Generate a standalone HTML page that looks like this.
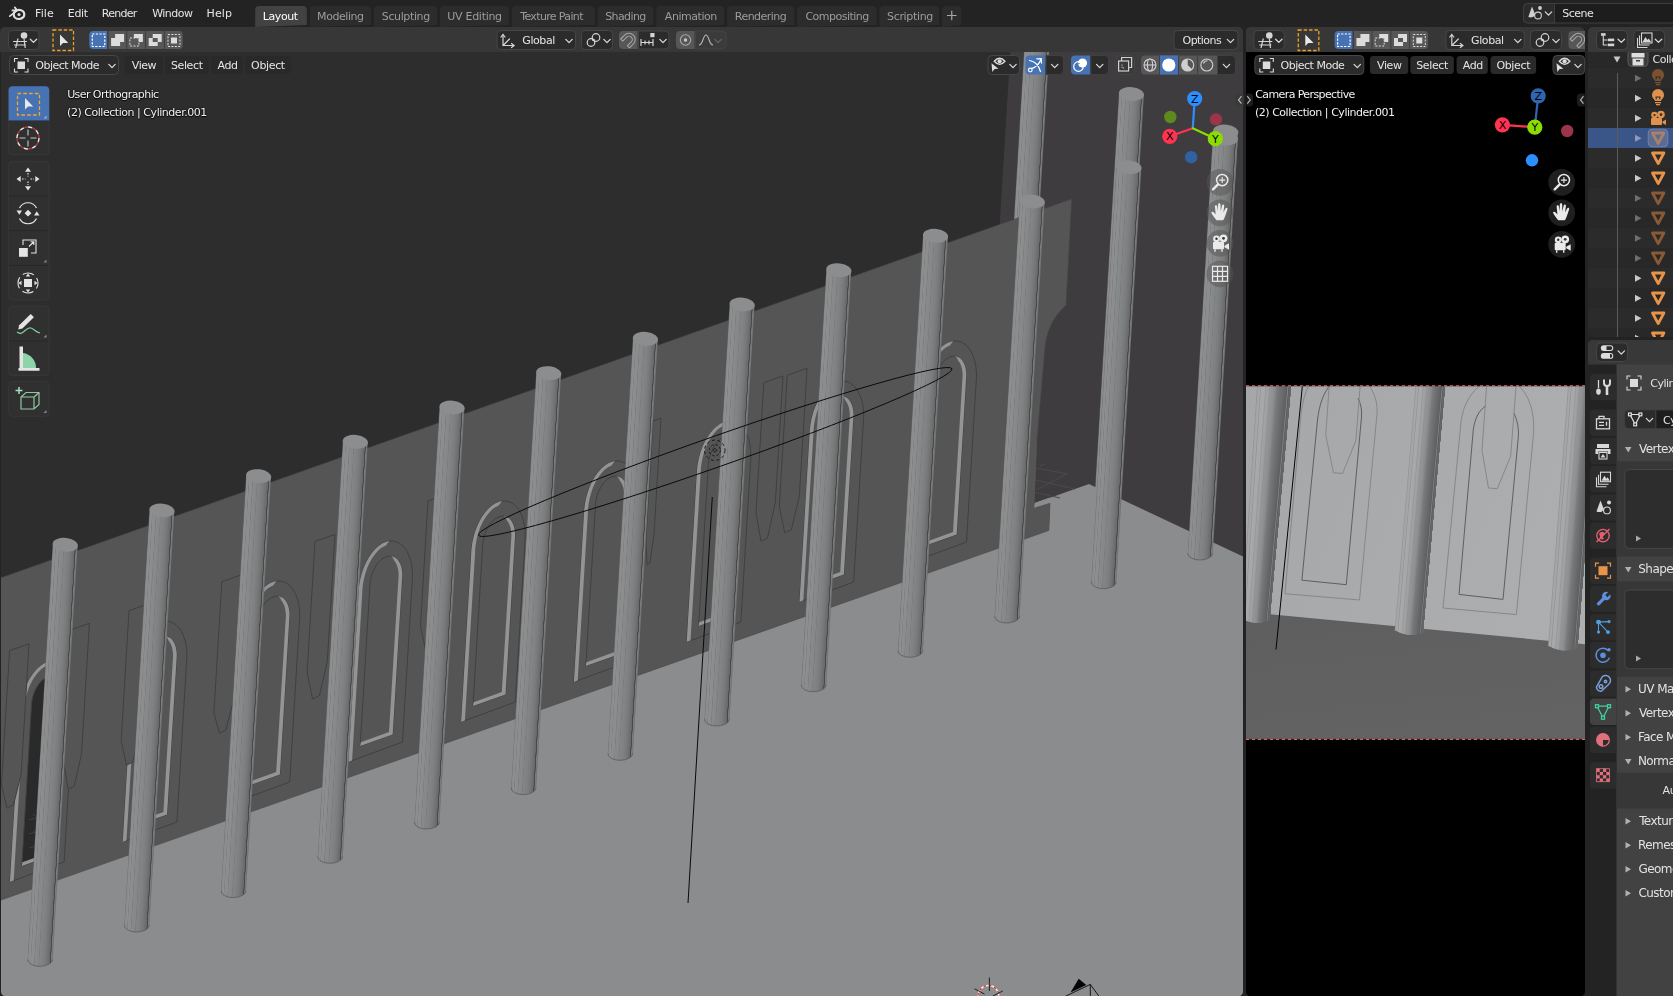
<!DOCTYPE html>
<html><head><meta charset="utf-8"><title>Blender</title>
<style>
html,body{margin:0;padding:0;background:#232323;overflow:hidden}
#app{position:relative;width:1673px;height:996px;background:#232323;overflow:hidden;font-family:'DejaVu Sans','Liberation Sans',sans-serif}
.t{position:absolute;z-index:5;white-space:nowrap;line-height:1;height:1em}
.b{position:absolute;box-sizing:border-box}
#tx{position:absolute;left:0;top:0;width:1673px;height:996px;z-index:5;will-change:transform}
svg{position:absolute;left:0;top:0;overflow:hidden}
</style></head><body><div id="app">
<svg width="1673" height="996" viewBox="0 0 1673 996"><defs>
<clipPath id="cv1"><rect x="1" y="27" width="1242" height="969.5" rx="5"/></clipPath>
<linearGradient id="colg" x1="0" x2="1" y1="0" y2="0"><stop offset="0" stop-color="#6c6d6e"/><stop offset="0.03" stop-color="#8a8b8c"/><stop offset="0.1" stop-color="#8f9091"/><stop offset="0.125" stop-color="#7d7e7f"/><stop offset="0.15" stop-color="#8d8e8f"/><stop offset="0.25" stop-color="#8b8c8d"/><stop offset="0.275" stop-color="#7b7c7d"/><stop offset="0.3" stop-color="#898a8b"/><stop offset="0.43" stop-color="#868788"/><stop offset="0.455" stop-color="#7a7b7c"/><stop offset="0.48" stop-color="#848586"/><stop offset="0.62" stop-color="#7f8081"/><stop offset="0.75" stop-color="#767778"/><stop offset="0.84" stop-color="#6c6d6e"/><stop offset="0.885" stop-color="#686969"/><stop offset="0.895" stop-color="#474747"/><stop offset="0.925" stop-color="#4b4b4b"/><stop offset="0.94" stop-color="#7c7d7e"/><stop offset="1.0" stop-color="#6f7071"/></linearGradient>
</defs>
<g clip-path="url(#cv1)">
<rect x="0" y="27" width="1244" height="970" fill="#2d2d2d"/>
<polygon points="1011.8,27 1244,27 1244,560 1089,484 990,520 999.8,222" fill="#3e3c3e"/>
<g transform="translate(1041.5,-30.0) skewX(-3.451)"><rect x="-12.5" y="0" width="25.0" height="260" fill="url(#colg)"/></g>
<g transform="translate(1131.4,94.0) skewX(-3.451)"><path d="M-12.5,0 L-12.5,414.7 A12.5,6.8 0 0 0 12.5,414.7 L12.5,0 Z" fill="url(#colg)"/><path d="M-12.5,414.7 A12.5,6.8 0 0 0 12.5,414.7" fill="none" stroke="#5c5c5d" stroke-width="0.8"/><ellipse cx="0" cy="0" rx="12.7" ry="6.8" fill="#8c8d8e" transform="rotate(7)"/></g>
<g transform="translate(1225.7,131.5) skewX(-3.451)"><rect x="-12.5" y="0" width="25.0" height="60" fill="url(#colg)"/><ellipse cx="0" cy="0" rx="12.7" ry="6.8" fill="#8c8d8e" transform="rotate(7)"/></g>
<polygon points="0,868 1089,484 1244,557 1244,1000 0,1000" fill="#8b8c8d"/>
<g stroke="#4b4a4b" stroke-width="1" fill="none"><path d="M1036,468 L1068,474 M1035,480 L1075,489 M1034,492 L1060,498 M1036,490 L1067,474 M1040,466 L1045,464"/></g>
<path d="M0,578.2 L1071.7,199 L1066,305 C1052,318 1046,332 1044.5,352 L1037,440 L1034,503 L1050,503.5 L1048.8,530.5 L0,900.4 Z" fill="#555555" stroke="#484848" stroke-width="0.6"/>
<polygon points="1034.5,503 1050,497.5 1050,503 1034,508" fill="#8b8c8d"/>
<polygon points="1025,506 1034.5,503 1034,508 1050,503 1049,530 1024,538.5" fill="#555555"/>
<polygon points="1029,440 1037,440 1034.5,503 1025,506" fill="#555555"/>
<polygon points="9.9,882.0 19.9,715.6 20.2,709.8 20.9,703.9 22.1,698.0 23.7,692.3 25.7,686.8 28.0,681.7 30.7,676.9 33.7,672.7 36.9,669.0 40.3,666.0 43.8,663.6 47.3,662.0 50.8,661.1 54.3,661.0 57.6,661.7 60.8,663.1 63.7,665.2 66.4,668.1 68.7,671.6 70.6,675.7 72.2,680.3 73.3,685.3 73.9,690.7 74.1,696.4 64.1,862.0" fill="none" stroke="#404040" stroke-width="1"/>
<polygon points="9.9,882.0 19.9,715.6 20.2,709.8 20.9,703.9 22.1,698.0 23.7,692.3 25.7,686.8 28.0,681.7 30.7,676.9 33.7,672.7 36.9,669.0 40.3,666.0 43.8,663.6 47.3,662.0 50.8,661.1 47.5,665.6 44.4,667.0 41.4,669.1 38.5,671.9 35.8,675.2 33.2,679.0 30.9,683.3 28.8,688.0 27.1,693.0 25.7,698.2 24.7,703.6 24.0,709.0 23.8,714.3 13.7,880.6" fill="#939495"/>
<polygon points="21.8,866.0 31.4,706.8 31.6,703.5 32.1,700.3 32.8,697.1 33.7,693.9 34.9,690.8 36.4,688.0 38.0,685.3 39.7,682.9 41.7,680.8 43.7,679.1 45.8,677.8 47.9,676.8 50.0,676.3 52.1,676.1 54.1,676.4 56.0,677.2 57.8,678.3 59.3,679.8 60.7,681.7 61.9,683.9 62.8,686.4 63.4,689.2 63.8,692.1 63.9,695.2 54.3,854.5" fill="#2a2a2a" stroke="#404040" stroke-width="1"/>
<g stroke="#444" stroke-width="0.8"><path d="M29,820 l22,-6 M29,834 l22,-6 M29,848 l22,-6 M33,814 l12,10 M33,830 l12,10"/></g>
<polygon points="52.1,676.1 54.1,676.4 56.0,677.2 57.8,678.3 59.3,679.8 60.7,681.7 61.9,683.9 62.8,686.4 63.4,689.2 63.8,692.1 63.9,695.2 54.3,854.5 21.8,866.0 22.4,862.2 50.6,851.9 60.2,695.8 60.1,692.6 59.7,689.7 59.1,686.9 58.2,684.4 57.0,682.2 55.6,680.3 55.0,678.7 54.1,677.4 53.2,676.6 52.1,676.1" fill="#939495"/>
<polygon points="122.7,842.0 132.7,675.6 133.0,669.8 133.7,663.9 134.9,658.0 136.5,652.3 138.5,646.8 140.8,641.7 143.5,636.9 146.5,632.7 149.7,629.0 153.1,626.0 156.6,623.6 160.1,622.0 163.6,621.1 167.1,621.0 170.4,621.7 173.6,623.1 176.5,625.2 179.2,628.1 181.5,631.6 183.4,635.7 185.0,640.3 186.1,645.3 186.7,650.7 186.9,656.4 176.9,822.0" fill="none" stroke="#404040" stroke-width="1"/>
<polygon points="122.7,842.0 132.7,675.6 133.0,669.8 133.7,663.9 134.9,658.0 136.5,652.3 138.5,646.8 140.8,641.7 143.5,636.9 146.5,632.7 149.7,629.0 153.1,626.0 156.6,623.6 160.1,622.0 163.6,621.1 160.3,625.6 157.2,627.0 154.2,629.1 151.3,631.9 148.6,635.2 146.0,639.0 143.7,643.3 141.6,648.0 139.9,653.0 138.5,658.2 137.5,663.6 136.8,669.0 136.6,674.3 126.5,840.6" fill="#939495"/>
<polygon points="134.6,826.0 144.2,666.8 144.4,663.5 144.9,660.3 145.6,657.1 146.5,653.9 147.7,650.8 149.2,648.0 150.8,645.3 152.5,642.9 154.5,640.8 156.5,639.1 158.6,637.8 160.7,636.8 162.8,636.3 164.9,636.1 166.9,636.4 168.8,637.2 170.6,638.3 172.1,639.8 173.5,641.7 174.7,643.9 175.6,646.4 176.2,649.2 176.6,652.1 176.8,655.2 167.1,814.5" fill="none" stroke="#404040" stroke-width="1"/>
<polygon points="164.9,636.1 166.9,636.4 168.8,637.2 170.6,638.3 172.1,639.8 173.5,641.7 174.7,643.9 175.6,646.4 176.2,649.2 176.6,652.1 176.8,655.2 167.1,814.5 134.6,826.0 135.2,822.2 163.4,811.9 173.1,655.8 172.9,652.6 172.5,649.7 171.9,646.9 171.0,644.4 169.8,642.2 168.4,640.3 167.8,638.7 166.9,637.4 166.0,636.6 164.9,636.1" fill="#939495"/>
<polygon points="235.5,802.0 245.5,635.6 245.8,629.8 246.5,623.9 247.7,618.0 249.3,612.3 251.3,606.8 253.6,601.7 256.3,596.9 259.3,592.7 262.5,589.0 265.9,586.0 269.4,583.6 272.9,582.0 276.4,581.1 279.9,581.0 283.2,581.7 286.4,583.1 289.3,585.2 292.0,588.1 294.3,591.6 296.2,595.7 297.8,600.3 298.9,605.3 299.5,610.7 299.7,616.4 289.7,782.0" fill="none" stroke="#404040" stroke-width="1"/>
<polygon points="235.5,802.0 245.5,635.6 245.8,629.8 246.5,623.9 247.7,618.0 249.3,612.3 251.3,606.8 253.6,601.7 256.3,596.9 259.3,592.7 262.5,589.0 265.9,586.0 269.4,583.6 272.9,582.0 276.4,581.1 273.1,585.6 270.0,587.0 267.0,589.1 264.1,591.9 261.4,595.2 258.8,599.0 256.5,603.3 254.4,608.0 252.7,613.0 251.3,618.2 250.3,623.6 249.6,629.0 249.4,634.3 239.3,800.6" fill="#939495"/>
<polygon points="247.4,786.0 257.0,626.8 257.2,623.5 257.7,620.3 258.4,617.1 259.3,613.9 260.5,610.8 262.0,608.0 263.6,605.3 265.3,602.9 267.3,600.8 269.3,599.1 271.4,597.8 273.5,596.8 275.6,596.3 277.7,596.1 279.7,596.4 281.6,597.2 283.4,598.3 284.9,599.8 286.3,601.7 287.5,603.9 288.4,606.4 289.0,609.2 289.4,612.1 289.5,615.2 279.9,774.5" fill="none" stroke="#404040" stroke-width="1"/>
<polygon points="277.7,596.1 279.7,596.4 281.6,597.2 283.4,598.3 284.9,599.8 286.3,601.7 287.5,603.9 288.4,606.4 289.0,609.2 289.4,612.1 289.5,615.2 279.9,774.5 247.4,786.0 248.0,782.2 276.2,771.9 285.9,615.8 285.7,612.6 285.3,609.7 284.7,606.9 283.8,604.4 282.6,602.2 281.2,600.3 280.6,598.7 279.7,597.4 278.8,596.6 277.7,596.1" fill="#939495"/>
<polygon points="348.3,762.0 358.3,595.6 358.6,589.8 359.3,583.9 360.5,578.0 362.1,572.3 364.1,566.8 366.4,561.7 369.1,556.9 372.1,552.7 375.3,549.0 378.7,546.0 382.2,543.6 385.7,542.0 389.2,541.1 392.7,541.0 396.0,541.7 399.2,543.1 402.1,545.2 404.8,548.1 407.1,551.6 409.0,555.7 410.6,560.3 411.7,565.3 412.3,570.7 412.5,576.4 402.5,742.0" fill="none" stroke="#404040" stroke-width="1"/>
<polygon points="348.3,762.0 358.3,595.6 358.6,589.8 359.3,583.9 360.5,578.0 362.1,572.3 364.1,566.8 366.4,561.7 369.1,556.9 372.1,552.7 375.3,549.0 378.7,546.0 382.2,543.6 385.7,542.0 389.2,541.1 385.9,545.6 382.8,547.0 379.8,549.1 376.9,551.9 374.2,555.2 371.6,559.0 369.3,563.3 367.2,568.0 365.5,573.0 364.1,578.2 363.1,583.6 362.4,589.0 362.2,594.3 352.1,760.6" fill="#939495"/>
<polygon points="360.2,746.0 369.8,586.8 370.0,583.5 370.5,580.3 371.2,577.1 372.1,573.9 373.3,570.8 374.8,568.0 376.4,565.3 378.1,562.9 380.1,560.8 382.1,559.1 384.2,557.8 386.3,556.8 388.4,556.3 390.5,556.1 392.5,556.4 394.4,557.2 396.2,558.3 397.7,559.8 399.1,561.7 400.3,563.9 401.2,566.4 401.8,569.2 402.2,572.1 402.3,575.2 392.7,734.5" fill="none" stroke="#404040" stroke-width="1"/>
<polygon points="390.5,556.1 392.5,556.4 394.4,557.2 396.2,558.3 397.7,559.8 399.1,561.7 400.3,563.9 401.2,566.4 401.8,569.2 402.2,572.1 402.3,575.2 392.7,734.5 360.2,746.0 360.8,742.2 389.0,731.9 398.6,575.8 398.5,572.6 398.1,569.7 397.5,566.9 396.6,564.4 395.4,562.2 394.0,560.3 393.4,558.7 392.5,557.4 391.6,556.6 390.5,556.1" fill="#939495"/>
<polygon points="461.1,722.0 471.1,555.6 471.4,549.8 472.1,543.9 473.3,538.0 474.9,532.3 476.9,526.8 479.2,521.7 481.9,516.9 484.9,512.7 488.1,509.0 491.5,506.0 495.0,503.6 498.5,502.0 502.0,501.1 505.5,501.0 508.8,501.7 512.0,503.1 514.9,505.2 517.6,508.1 519.9,511.6 521.8,515.7 523.4,520.3 524.5,525.3 525.1,530.7 525.3,536.4 515.3,702.0" fill="none" stroke="#404040" stroke-width="1"/>
<polygon points="461.1,722.0 471.1,555.6 471.4,549.8 472.1,543.9 473.3,538.0 474.9,532.3 476.9,526.8 479.2,521.7 481.9,516.9 484.9,512.7 488.1,509.0 491.5,506.0 495.0,503.6 498.5,502.0 502.0,501.1 498.7,505.6 495.6,507.0 492.6,509.1 489.7,511.9 487.0,515.2 484.4,519.0 482.1,523.3 480.0,528.0 478.3,533.0 476.9,538.2 475.9,543.6 475.2,549.0 475.0,554.3 464.9,720.6" fill="#939495"/>
<polygon points="473.0,706.0 482.6,546.8 482.8,543.5 483.3,540.3 484.0,537.1 484.9,533.9 486.1,530.8 487.6,528.0 489.2,525.3 490.9,522.9 492.9,520.8 494.9,519.1 497.0,517.8 499.1,516.8 501.2,516.3 503.3,516.1 505.3,516.4 507.2,517.2 509.0,518.3 510.5,519.8 511.9,521.7 513.1,523.9 514.0,526.4 514.6,529.2 515.0,532.1 515.1,535.2 505.5,694.5" fill="none" stroke="#404040" stroke-width="1"/>
<polygon points="503.3,516.1 505.3,516.4 507.2,517.2 509.0,518.3 510.5,519.8 511.9,521.7 513.1,523.9 514.0,526.4 514.6,529.2 515.0,532.1 515.1,535.2 505.5,694.5 473.0,706.0 473.6,702.2 501.8,691.9 511.4,535.8 511.3,532.6 510.9,529.7 510.3,526.9 509.4,524.4 508.2,522.2 506.8,520.3 506.2,518.7 505.3,517.4 504.4,516.6 503.3,516.1" fill="#939495"/>
<polygon points="573.9,682.0 583.9,515.6 584.2,509.8 584.9,503.9 586.1,498.0 587.7,492.3 589.7,486.8 592.0,481.7 594.7,476.9 597.7,472.7 600.9,469.0 604.3,466.0 607.8,463.6 611.3,462.0 614.8,461.1 618.3,461.0 621.6,461.7 624.8,463.1 627.7,465.2 630.4,468.1 632.7,471.6 634.6,475.7 636.2,480.3 637.3,485.3 637.9,490.7 638.1,496.4 628.1,662.0" fill="none" stroke="#404040" stroke-width="1"/>
<polygon points="573.9,682.0 583.9,515.6 584.2,509.8 584.9,503.9 586.1,498.0 587.7,492.3 589.7,486.8 592.0,481.7 594.7,476.9 597.7,472.7 600.9,469.0 604.3,466.0 607.8,463.6 611.3,462.0 614.8,461.1 611.5,465.6 608.4,467.0 605.4,469.1 602.5,471.9 599.8,475.2 597.2,479.0 594.9,483.3 592.8,488.0 591.1,493.0 589.7,498.2 588.7,503.6 588.0,509.0 587.8,514.3 577.7,680.6" fill="#939495"/>
<polygon points="585.8,666.0 595.4,506.8 595.6,503.5 596.1,500.3 596.8,497.1 597.7,493.9 598.9,490.8 600.4,488.0 602.0,485.3 603.7,482.9 605.7,480.8 607.7,479.1 609.8,477.8 611.9,476.8 614.0,476.3 616.1,476.1 618.1,476.4 620.0,477.2 621.8,478.3 623.3,479.8 624.7,481.7 625.9,483.9 626.8,486.4 627.4,489.2 627.8,492.1 627.9,495.2 618.3,654.5" fill="none" stroke="#404040" stroke-width="1"/>
<polygon points="616.1,476.1 618.1,476.4 620.0,477.2 621.8,478.3 623.3,479.8 624.7,481.7 625.9,483.9 626.8,486.4 627.4,489.2 627.8,492.1 627.9,495.2 618.3,654.5 585.8,666.0 586.4,662.2 614.6,651.9 624.2,495.8 624.1,492.6 623.7,489.7 623.1,486.9 622.2,484.4 621.0,482.2 619.6,480.3 619.0,478.7 618.1,477.4 617.2,476.6 616.1,476.1" fill="#939495"/>
<polygon points="686.7,642.0 696.7,475.6 697.0,469.8 697.7,463.9 698.9,458.0 700.5,452.3 702.5,446.8 704.8,441.7 707.5,436.9 710.5,432.7 713.7,429.0 717.1,426.0 720.6,423.6 724.1,422.0 727.6,421.1 731.1,421.0 734.4,421.7 737.6,423.1 740.5,425.2 743.2,428.1 745.5,431.6 747.4,435.7 749.0,440.3 750.1,445.3 750.7,450.7 750.9,456.4 740.9,622.0" fill="none" stroke="#404040" stroke-width="1"/>
<polygon points="686.7,642.0 696.7,475.6 697.0,469.8 697.7,463.9 698.9,458.0 700.5,452.3 702.5,446.8 704.8,441.7 707.5,436.9 710.5,432.7 713.7,429.0 717.1,426.0 720.6,423.6 724.1,422.0 727.6,421.1 724.3,425.6 721.2,427.0 718.2,429.1 715.3,431.9 712.6,435.2 710.0,439.0 707.7,443.3 705.6,448.0 703.9,453.0 702.5,458.2 701.5,463.6 700.8,469.0 700.6,474.3 690.5,640.6" fill="#939495"/>
<polygon points="698.6,626.0 708.2,466.8 708.4,463.5 708.9,460.3 709.6,457.1 710.5,453.9 711.7,450.8 713.2,448.0 714.8,445.3 716.5,442.9 718.5,440.8 720.5,439.1 722.6,437.8 724.7,436.8 726.8,436.3 728.9,436.1 730.9,436.4 732.8,437.2 734.6,438.3 736.1,439.8 737.5,441.7 738.7,443.9 739.6,446.4 740.2,449.2 740.6,452.1 740.8,455.2 731.1,614.5" fill="none" stroke="#404040" stroke-width="1"/>
<polygon points="728.9,436.1 730.9,436.4 732.8,437.2 734.6,438.3 736.1,439.8 737.5,441.7 738.7,443.9 739.6,446.4 740.2,449.2 740.6,452.1 740.8,455.2 731.1,614.5 698.6,626.0 699.2,622.2 727.4,611.9 737.0,455.8 736.9,452.6 736.5,449.7 735.9,446.9 735.0,444.4 733.8,442.2 732.4,440.3 731.8,438.7 730.9,437.4 730.0,436.6 728.9,436.1" fill="#939495"/>
<polygon points="799.5,602.0 809.5,435.6 809.8,429.8 810.5,423.9 811.7,418.0 813.3,412.3 815.3,406.8 817.6,401.7 820.3,396.9 823.3,392.7 826.5,389.0 829.9,386.0 833.4,383.6 836.9,382.0 840.4,381.1 843.9,381.0 847.2,381.7 850.4,383.1 853.3,385.2 856.0,388.1 858.3,391.6 860.2,395.7 861.8,400.3 862.9,405.3 863.5,410.7 863.7,416.4 853.7,582.0" fill="none" stroke="#404040" stroke-width="1"/>
<polygon points="799.5,602.0 809.5,435.6 809.8,429.8 810.5,423.9 811.7,418.0 813.3,412.3 815.3,406.8 817.6,401.7 820.3,396.9 823.3,392.7 826.5,389.0 829.9,386.0 833.4,383.6 836.9,382.0 840.4,381.1 837.1,385.6 834.0,387.0 831.0,389.1 828.1,391.9 825.4,395.2 822.8,399.0 820.5,403.3 818.4,408.0 816.7,413.0 815.3,418.2 814.3,423.6 813.6,429.0 813.4,434.3 803.3,600.6" fill="#939495"/>
<polygon points="811.4,586.0 821.0,426.8 821.2,423.5 821.7,420.3 822.4,417.1 823.3,413.9 824.5,410.8 826.0,408.0 827.6,405.3 829.3,402.9 831.3,400.8 833.3,399.1 835.4,397.8 837.5,396.8 839.6,396.3 841.7,396.1 843.7,396.4 845.6,397.2 847.4,398.3 848.9,399.8 850.3,401.7 851.5,403.9 852.4,406.4 853.0,409.2 853.4,412.1 853.5,415.2 843.9,574.5" fill="none" stroke="#404040" stroke-width="1"/>
<polygon points="841.7,396.1 843.7,396.4 845.6,397.2 847.4,398.3 848.9,399.8 850.3,401.7 851.5,403.9 852.4,406.4 853.0,409.2 853.4,412.1 853.5,415.2 843.9,574.5 811.4,586.0 812.0,582.2 840.2,571.9 849.8,415.8 849.7,412.6 849.3,409.7 848.7,406.9 847.8,404.4 846.6,402.2 845.2,400.3 844.6,398.7 843.7,397.4 842.8,396.6 841.7,396.1" fill="#939495"/>
<polygon points="912.3,562.0 922.3,395.6 922.6,389.8 923.3,383.9 924.5,378.0 926.1,372.3 928.1,366.8 930.4,361.7 933.1,356.9 936.1,352.7 939.3,349.0 942.7,346.0 946.2,343.6 949.7,342.0 953.2,341.1 956.7,341.0 960.0,341.7 963.2,343.1 966.1,345.2 968.8,348.1 971.1,351.6 973.0,355.7 974.6,360.3 975.7,365.3 976.3,370.7 976.5,376.4 966.5,542.0" fill="none" stroke="#404040" stroke-width="1"/>
<polygon points="912.3,562.0 922.3,395.6 922.6,389.8 923.3,383.9 924.5,378.0 926.1,372.3 928.1,366.8 930.4,361.7 933.1,356.9 936.1,352.7 939.3,349.0 942.7,346.0 946.2,343.6 949.7,342.0 953.2,341.1 949.9,345.6 946.8,347.0 943.8,349.1 940.9,351.9 938.2,355.2 935.6,359.0 933.3,363.3 931.2,368.0 929.5,373.0 928.1,378.2 927.1,383.6 926.4,389.0 926.2,394.3 916.1,560.6" fill="#939495"/>
<polygon points="924.2,546.0 933.8,386.8 934.0,383.5 934.5,380.3 935.2,377.1 936.1,373.9 937.3,370.8 938.8,368.0 940.4,365.3 942.1,362.9 944.1,360.8 946.1,359.1 948.2,357.8 950.3,356.8 952.4,356.3 954.5,356.1 956.5,356.4 958.4,357.2 960.2,358.3 961.7,359.8 963.1,361.7 964.3,363.9 965.2,366.4 965.8,369.2 966.2,372.1 966.3,375.2 956.7,534.5" fill="none" stroke="#404040" stroke-width="1"/>
<polygon points="954.5,356.1 956.5,356.4 958.4,357.2 960.2,358.3 961.7,359.8 963.1,361.7 964.3,363.9 965.2,366.4 965.8,369.2 966.2,372.1 966.3,375.2 956.7,534.5 924.2,546.0 924.8,542.2 953.0,531.9 962.6,375.8 962.5,372.6 962.1,369.7 961.5,366.9 960.6,364.4 959.4,362.2 958.0,360.3 957.4,358.7 956.5,357.4 955.6,356.6 954.5,356.1" fill="#939495"/>
<polygon points="9.6,650.6 29.0,643.8 21.2,773.8 13.5,804.8 6.9,808.1 1.5,784.6" fill="#555555" stroke="#404040" stroke-width="1"/>
<polygon points="71.7,629.5 89.4,623.3 81.6,753.3 74.3,786.1 68.3,789.3 63.6,763.5" fill="#555555" stroke="#404040" stroke-width="1"/>
<polygon points="129.0,610.7 148.0,604.0 140.4,730.0 132.8,762.0 126.4,765.3 121.2,740.7" fill="#555555" stroke="#404040" stroke-width="1"/>
<polygon points="221.8,581.7 240.8,575.0 233.1,702.0 225.8,730.0 219.4,733.3 213.9,712.7" fill="#555555" stroke="#404040" stroke-width="1"/>
<polygon points="315.0,541.5 335.0,534.4 327.3,661.4 319.4,695.6 312.6,699.0 307.1,672.5" fill="#555555" stroke="#404040" stroke-width="1"/>
<polygon points="428.0,501.0 447.0,494.3 439.7,615.3 432.1,647.3 425.7,650.6 420.5,626.0" fill="#555555" stroke="#404040" stroke-width="1"/>
<polygon points="653.0,421.0 661.0,418.2 654.0,534.2 649.9,563.0 647.1,565.0 645.8,541.0" fill="#555555" stroke="#404040" stroke-width="1"/>
<polygon points="763.8,382.7 783.0,375.9 775.4,501.9 767.5,538.0 761.0,541.3 756.0,512.7" fill="#555555" stroke="#404040" stroke-width="1"/>
<polygon points="787.2,375.3 807.1,368.3 799.4,495.3 791.5,529.4 784.7,532.8 779.3,506.3" fill="#555555" stroke="#404040" stroke-width="1"/>
<g transform="translate(65.2,544.8) skewX(-3.451)"><path d="M-12.5,0 L-12.5,414.7 A12.5,6.8 0 0 0 12.5,414.7 L12.5,0 Z" fill="url(#colg)"/><path d="M-12.5,414.7 A12.5,6.8 0 0 0 12.5,414.7" fill="none" stroke="#5c5c5d" stroke-width="0.8"/><ellipse cx="0" cy="0" rx="12.7" ry="6.8" fill="#8c8d8e" transform="rotate(7)"/></g>
<g transform="translate(161.9,510.5) skewX(-3.451)"><path d="M-12.5,0 L-12.5,414.7 A12.5,6.8 0 0 0 12.5,414.7 L12.5,0 Z" fill="url(#colg)"/><path d="M-12.5,414.7 A12.5,6.8 0 0 0 12.5,414.7" fill="none" stroke="#5c5c5d" stroke-width="0.8"/><ellipse cx="0" cy="0" rx="12.7" ry="6.8" fill="#8c8d8e" transform="rotate(7)"/></g>
<g transform="translate(258.6,476.1) skewX(-3.451)"><path d="M-12.5,0 L-12.5,414.7 A12.5,6.8 0 0 0 12.5,414.7 L12.5,0 Z" fill="url(#colg)"/><path d="M-12.5,414.7 A12.5,6.8 0 0 0 12.5,414.7" fill="none" stroke="#5c5c5d" stroke-width="0.8"/><ellipse cx="0" cy="0" rx="12.7" ry="6.8" fill="#8c8d8e" transform="rotate(7)"/></g>
<g transform="translate(355.3,441.8) skewX(-3.451)"><path d="M-12.5,0 L-12.5,414.7 A12.5,6.8 0 0 0 12.5,414.7 L12.5,0 Z" fill="url(#colg)"/><path d="M-12.5,414.7 A12.5,6.8 0 0 0 12.5,414.7" fill="none" stroke="#5c5c5d" stroke-width="0.8"/><ellipse cx="0" cy="0" rx="12.7" ry="6.8" fill="#8c8d8e" transform="rotate(7)"/></g>
<g transform="translate(452.0,407.5) skewX(-3.451)"><path d="M-12.5,0 L-12.5,414.7 A12.5,6.8 0 0 0 12.5,414.7 L12.5,0 Z" fill="url(#colg)"/><path d="M-12.5,414.7 A12.5,6.8 0 0 0 12.5,414.7" fill="none" stroke="#5c5c5d" stroke-width="0.8"/><ellipse cx="0" cy="0" rx="12.7" ry="6.8" fill="#8c8d8e" transform="rotate(7)"/></g>
<g transform="translate(548.7,373.1) skewX(-3.451)"><path d="M-12.5,0 L-12.5,414.7 A12.5,6.8 0 0 0 12.5,414.7 L12.5,0 Z" fill="url(#colg)"/><path d="M-12.5,414.7 A12.5,6.8 0 0 0 12.5,414.7" fill="none" stroke="#5c5c5d" stroke-width="0.8"/><ellipse cx="0" cy="0" rx="12.7" ry="6.8" fill="#8c8d8e" transform="rotate(7)"/></g>
<g transform="translate(645.4,338.8) skewX(-3.451)"><path d="M-12.5,0 L-12.5,414.7 A12.5,6.8 0 0 0 12.5,414.7 L12.5,0 Z" fill="url(#colg)"/><path d="M-12.5,414.7 A12.5,6.8 0 0 0 12.5,414.7" fill="none" stroke="#5c5c5d" stroke-width="0.8"/><ellipse cx="0" cy="0" rx="12.7" ry="6.8" fill="#8c8d8e" transform="rotate(7)"/></g>
<g transform="translate(742.1,304.5) skewX(-3.451)"><path d="M-12.5,0 L-12.5,414.7 A12.5,6.8 0 0 0 12.5,414.7 L12.5,0 Z" fill="url(#colg)"/><path d="M-12.5,414.7 A12.5,6.8 0 0 0 12.5,414.7" fill="none" stroke="#5c5c5d" stroke-width="0.8"/><ellipse cx="0" cy="0" rx="12.7" ry="6.8" fill="#8c8d8e" transform="rotate(7)"/></g>
<g transform="translate(838.8,270.2) skewX(-3.451)"><path d="M-12.5,0 L-12.5,414.7 A12.5,6.8 0 0 0 12.5,414.7 L12.5,0 Z" fill="url(#colg)"/><path d="M-12.5,414.7 A12.5,6.8 0 0 0 12.5,414.7" fill="none" stroke="#5c5c5d" stroke-width="0.8"/><ellipse cx="0" cy="0" rx="12.7" ry="6.8" fill="#8c8d8e" transform="rotate(7)"/></g>
<g transform="translate(935.5,235.8) skewX(-3.451)"><path d="M-12.5,0 L-12.5,414.7 A12.5,6.8 0 0 0 12.5,414.7 L12.5,0 Z" fill="url(#colg)"/><path d="M-12.5,414.7 A12.5,6.8 0 0 0 12.5,414.7" fill="none" stroke="#5c5c5d" stroke-width="0.8"/><ellipse cx="0" cy="0" rx="12.7" ry="6.8" fill="#8c8d8e" transform="rotate(7)"/></g>
<g transform="translate(1032.2,201.5) skewX(-3.451)"><path d="M-12.5,0 L-12.5,414.7 A12.5,6.8 0 0 0 12.5,414.7 L12.5,0 Z" fill="url(#colg)"/><path d="M-12.5,414.7 A12.5,6.8 0 0 0 12.5,414.7" fill="none" stroke="#5c5c5d" stroke-width="0.8"/><ellipse cx="0" cy="0" rx="12.7" ry="6.8" fill="#8c8d8e" transform="rotate(7)"/></g>
<g transform="translate(1128.9,167.2) skewX(-3.451)"><path d="M-12.5,0 L-12.5,414.7 A12.5,6.8 0 0 0 12.5,414.7 L12.5,0 Z" fill="url(#colg)"/><path d="M-12.5,414.7 A12.5,6.8 0 0 0 12.5,414.7" fill="none" stroke="#5c5c5d" stroke-width="0.8"/><ellipse cx="0" cy="0" rx="12.7" ry="6.8" fill="#8c8d8e" transform="rotate(7)"/></g>
<g transform="translate(1225.3,138.5) skewX(-3.451)"><path d="M-12.5,0 L-12.5,414.7 A12.5,6.8 0 0 0 12.5,414.7 L12.5,0 Z" fill="url(#colg)"/><path d="M-12.5,414.7 A12.5,6.8 0 0 0 12.5,414.7" fill="none" stroke="#5c5c5d" stroke-width="0.8"/><ellipse cx="0" cy="0" rx="12.7" ry="6.8" fill="#8c8d8e" transform="rotate(7)"/></g>
<g fill="none" stroke="#0a0a0a" stroke-width="1">
<ellipse cx="715.2" cy="452" rx="251" ry="15.2" transform="rotate(-19.37 715.2 452)" stroke-width="0.9"/>
<path d="M712.3,497 L688,903"/>
</g>
<g fill="none" stroke="#111" stroke-width="0.9"><circle cx="714.8" cy="450.3" r="5.6" stroke-dasharray="2.4 2"/><circle cx="714.8" cy="450.3" r="10.2" stroke-dasharray="3 2.6"/><path d="M714.8,448.3 l2,2 -2,2 -2,-2z"/></g>
<g fill="none"><circle cx="988.4" cy="995.8" r="10.3" stroke="#f0f0f0" stroke-width="1.4"/><circle cx="988.4" cy="995.8" r="10.3" stroke="#e83030" stroke-width="1.4" stroke-dasharray="2.7 2.7"/><path d="M989.4,977.5 V991 M974.5,988.8 l10,5.200 M1002.800,991 l-10,5" stroke="#151515" stroke-width="0.9"/></g>
<path d="M1078.7,978.7 L1070.5,992.4 L1086.3,985 Z" fill="#050505"/><path d="M1064,997 L1090.3,984.4 L1099.500,997 M1090.300,984.400 V997" fill="none" stroke="#0a0a0a" stroke-width="0.9"/>
</g>
<defs><clipPath id="cv2"><rect x="1246" y="27" width="339" height="969.5" rx="5"/></clipPath>
<clipPath id="cf2"><rect x="1246" y="386" width="339" height="353.5"/></clipPath>
<linearGradient id="ccol" x1="0" x2="1" y1="0" y2="0">
<stop offset="0" stop-color="#8e8e8f"/><stop offset="0.05" stop-color="#a6a7a8"/><stop offset="0.16" stop-color="#9b9c9d"/><stop offset="0.2" stop-color="#aeafb0"/>
<stop offset="0.42" stop-color="#a9aaab"/><stop offset="0.55" stop-color="#98999a"/><stop offset="0.7" stop-color="#858687"/>
<stop offset="0.84" stop-color="#757677"/><stop offset="0.9" stop-color="#6a6b6c"/><stop offset="0.93" stop-color="#909192"/><stop offset="1" stop-color="#6e6f70"/>
</linearGradient>
<linearGradient id="cfloor" x1="0" x2="0.3" y1="0" y2="1"><stop offset="0" stop-color="#5e5e5f"/><stop offset="1" stop-color="#636364"/></linearGradient>
<linearGradient id="cwall" x1="0" x2="1" y1="0" y2="0.4"><stop offset="0" stop-color="#a6a7a8"/><stop offset="1" stop-color="#adaeaf"/></linearGradient>
</defs>
<g clip-path="url(#cv2)">
<rect x="1246" y="27" width="340" height="970" fill="#000"/>
<g clip-path="url(#cf2)">
<rect x="1246" y="386" width="340" height="354" fill="url(#cwall)"/>
<polygon points="1246,612.1 1585,644.2 1585,740 1246,740" fill="url(#cfloor)"/>
<polygon points="1257.0,386.0 1291.0,386.0 1269.5,620.0 1241.5,619.0" fill="#959596"/>
<polygon points="1257.8,386.0 1291.0,386.0 1269.5,620.0 1242.2,619.3" fill="#a4a5a6"/>
<polygon points="1258.7,386.0 1291.0,386.0 1269.5,620.0 1242.9,619.6" fill="#a6a7a8"/>
<polygon points="1259.5,386.0 1291.0,386.0 1269.5,620.0 1243.6,619.9" fill="#a7a8a9"/>
<polygon points="1260.4,386.0 1291.0,386.0 1269.5,620.0 1244.3,620.2" fill="#929394"/>
<polygon points="1261.2,386.0 1291.0,386.0 1269.5,620.0 1245.0,620.5" fill="#a9aaab"/>
<polygon points="1262.1,386.0 1291.0,386.0 1269.5,620.0 1245.7,620.7" fill="#a8a9aa"/>
<polygon points="1263.0,386.0 1291.0,386.0 1269.5,620.0 1246.4,621.0" fill="#a8a8aa"/>
<polygon points="1263.8,386.0 1291.0,386.0 1269.5,620.0 1247.1,621.3" fill="#a7a8a9"/>
<polygon points="1264.7,386.0 1291.0,386.0 1269.5,620.0 1247.8,621.5" fill="#a6a7a8"/>
<polygon points="1265.5,386.0 1291.0,386.0 1269.5,620.0 1248.5,621.7" fill="#959697"/>
<polygon points="1266.3,386.0 1291.0,386.0 1269.5,620.0 1249.2,621.9" fill="#a2a3a4"/>
<polygon points="1267.2,386.0 1291.0,386.0 1269.5,620.0 1249.9,622.1" fill="#a1a2a3"/>
<polygon points="1268.0,386.0 1291.0,386.0 1269.5,620.0 1250.6,622.3" fill="#a0a1a2"/>
<polygon points="1268.9,386.0 1291.0,386.0 1269.5,620.0 1251.3,622.5" fill="#9c9c9e"/>
<polygon points="1269.8,386.0 1291.0,386.0 1269.5,620.0 1252.0,622.6" fill="#909192"/>
<polygon points="1270.6,386.0 1291.0,386.0 1269.5,620.0 1252.7,622.7" fill="#959697"/>
<polygon points="1271.5,386.0 1291.0,386.0 1269.5,620.0 1253.4,622.8" fill="#939495"/>
<polygon points="1272.3,386.0 1291.0,386.0 1269.5,620.0 1254.1,622.9" fill="#919293"/>
<polygon points="1273.2,386.0 1291.0,386.0 1269.5,620.0 1254.8,623.0" fill="#8f9091"/>
<polygon points="1274.0,386.0 1291.0,386.0 1269.5,620.0 1255.5,623.0" fill="#8e8f90"/>
<polygon points="1274.8,386.0 1291.0,386.0 1269.5,620.0 1256.2,623.0" fill="#898a8b"/>
<polygon points="1275.7,386.0 1291.0,386.0 1269.5,620.0 1256.9,623.0" fill="#838485"/>
<polygon points="1276.5,386.0 1291.0,386.0 1269.5,620.0 1257.6,623.0" fill="#7d7e7f"/>
<polygon points="1277.4,386.0 1291.0,386.0 1269.5,620.0 1258.3,622.9" fill="#797a7b"/>
<polygon points="1278.2,386.0 1291.0,386.0 1269.5,620.0 1259.0,622.9" fill="#767778"/>
<polygon points="1279.1,386.0 1291.0,386.0 1269.5,620.0 1259.7,622.8" fill="#747576"/>
<polygon points="1280.0,386.0 1291.0,386.0 1269.5,620.0 1260.4,622.7" fill="#717273"/>
<polygon points="1280.8,386.0 1291.0,386.0 1269.5,620.0 1261.1,622.5" fill="#6f7071"/>
<polygon points="1281.7,386.0 1291.0,386.0 1269.5,620.0 1261.8,622.4" fill="#6d6e6f"/>
<polygon points="1282.5,386.0 1291.0,386.0 1269.5,620.0 1262.5,622.2" fill="#6a6b6c"/>
<polygon points="1283.3,386.0 1291.0,386.0 1269.5,620.0 1263.2,622.0" fill="#68696a"/>
<polygon points="1284.2,386.0 1291.0,386.0 1269.5,620.0 1263.9,621.9" fill="#666768"/>
<polygon points="1285.0,386.0 1291.0,386.0 1269.5,620.0 1264.6,621.7" fill="#646566"/>
<polygon points="1285.9,386.0 1291.0,386.0 1269.5,620.0 1265.3,621.4" fill="#616263"/>
<polygon points="1286.8,386.0 1291.0,386.0 1269.5,620.0 1266.0,621.2" fill="#5d5e5f"/>
<polygon points="1287.6,386.0 1291.0,386.0 1269.5,620.0 1266.7,621.0" fill="#878889"/>
<polygon points="1288.5,386.0 1291.0,386.0 1269.5,620.0 1267.4,620.7" fill="#575859"/>
<polygon points="1289.3,386.0 1291.0,386.0 1269.5,620.0 1268.1,620.5" fill="#696a6b"/>
<polygon points="1290.2,386.0 1291.0,386.0 1269.5,620.0 1268.8,620.2" fill="#636465"/>
<polygon points="1415.5,386.0 1445.0,386.0 1422.9,632.5 1394.7,630.5" fill="#959596"/>
<polygon points="1416.2,386.0 1445.0,386.0 1422.9,632.5 1395.4,630.8" fill="#a4a5a6"/>
<polygon points="1417.0,386.0 1445.0,386.0 1422.9,632.5 1396.1,631.1" fill="#a6a7a8"/>
<polygon points="1417.7,386.0 1445.0,386.0 1422.9,632.5 1396.8,631.5" fill="#a7a8a9"/>
<polygon points="1418.5,386.0 1445.0,386.0 1422.9,632.5 1397.5,631.8" fill="#929394"/>
<polygon points="1419.2,386.0 1445.0,386.0 1422.9,632.5 1398.2,632.1" fill="#a9aaab"/>
<polygon points="1419.9,386.0 1445.0,386.0 1422.9,632.5 1398.9,632.4" fill="#a8a9aa"/>
<polygon points="1420.7,386.0 1445.0,386.0 1422.9,632.5 1399.6,632.7" fill="#a8a8aa"/>
<polygon points="1421.4,386.0 1445.0,386.0 1422.9,632.5 1400.3,633.0" fill="#a7a8a9"/>
<polygon points="1422.1,386.0 1445.0,386.0 1422.9,632.5 1401.0,633.2" fill="#a6a7a8"/>
<polygon points="1422.9,386.0 1445.0,386.0 1422.9,632.5 1401.8,633.5" fill="#959697"/>
<polygon points="1423.6,386.0 1445.0,386.0 1422.9,632.5 1402.5,633.7" fill="#a2a3a4"/>
<polygon points="1424.3,386.0 1445.0,386.0 1422.9,632.5 1403.2,633.9" fill="#a1a2a3"/>
<polygon points="1425.1,386.0 1445.0,386.0 1422.9,632.5 1403.9,634.1" fill="#a0a1a2"/>
<polygon points="1425.8,386.0 1445.0,386.0 1422.9,632.5 1404.6,634.3" fill="#9c9c9e"/>
<polygon points="1426.6,386.0 1445.0,386.0 1422.9,632.5 1405.3,634.5" fill="#909192"/>
<polygon points="1427.3,386.0 1445.0,386.0 1422.9,632.5 1406.0,634.6" fill="#959697"/>
<polygon points="1428.0,386.0 1445.0,386.0 1422.9,632.5 1406.7,634.8" fill="#939495"/>
<polygon points="1428.8,386.0 1445.0,386.0 1422.9,632.5 1407.4,634.9" fill="#919293"/>
<polygon points="1429.5,386.0 1445.0,386.0 1422.9,632.5 1408.1,634.9" fill="#8f9091"/>
<polygon points="1430.2,386.0 1445.0,386.0 1422.9,632.5 1408.8,635.0" fill="#8e8f90"/>
<polygon points="1431.0,386.0 1445.0,386.0 1422.9,632.5 1409.5,635.0" fill="#898a8b"/>
<polygon points="1431.7,386.0 1445.0,386.0 1422.9,632.5 1410.2,635.1" fill="#838485"/>
<polygon points="1432.5,386.0 1445.0,386.0 1422.9,632.5 1410.9,635.1" fill="#7d7e7f"/>
<polygon points="1433.2,386.0 1445.0,386.0 1422.9,632.5 1411.6,635.0" fill="#797a7b"/>
<polygon points="1433.9,386.0 1445.0,386.0 1422.9,632.5 1412.3,635.0" fill="#767778"/>
<polygon points="1434.7,386.0 1445.0,386.0 1422.9,632.5 1413.0,634.9" fill="#747576"/>
<polygon points="1435.4,386.0 1445.0,386.0 1422.9,632.5 1413.7,634.8" fill="#717273"/>
<polygon points="1436.2,386.0 1445.0,386.0 1422.9,632.5 1414.4,634.7" fill="#6f7071"/>
<polygon points="1436.9,386.0 1445.0,386.0 1422.9,632.5 1415.1,634.6" fill="#6d6e6f"/>
<polygon points="1437.6,386.0 1445.0,386.0 1422.9,632.5 1415.9,634.5" fill="#6a6b6c"/>
<polygon points="1438.4,386.0 1445.0,386.0 1422.9,632.5 1416.6,634.3" fill="#68696a"/>
<polygon points="1439.1,386.0 1445.0,386.0 1422.9,632.5 1417.3,634.2" fill="#666768"/>
<polygon points="1439.8,386.0 1445.0,386.0 1422.9,632.5 1418.0,634.0" fill="#646566"/>
<polygon points="1440.6,386.0 1445.0,386.0 1422.9,632.5 1418.7,633.8" fill="#616263"/>
<polygon points="1441.3,386.0 1445.0,386.0 1422.9,632.5 1419.4,633.6" fill="#5d5e5f"/>
<polygon points="1442.0,386.0 1445.0,386.0 1422.9,632.5 1420.1,633.4" fill="#878889"/>
<polygon points="1442.8,386.0 1445.0,386.0 1422.9,632.5 1420.8,633.2" fill="#575859"/>
<polygon points="1443.5,386.0 1445.0,386.0 1422.9,632.5 1421.5,632.9" fill="#696a6b"/>
<polygon points="1444.3,386.0 1445.0,386.0 1422.9,632.5 1422.2,632.7" fill="#636465"/>
<polygon points="1568.0,386.0 1598.0,386.0 1577.4,648.0 1548.0,646.0" fill="#959596"/>
<polygon points="1568.8,386.0 1598.0,386.0 1577.4,648.0 1548.7,646.3" fill="#a4a5a6"/>
<polygon points="1569.5,386.0 1598.0,386.0 1577.4,648.0 1549.5,646.6" fill="#a6a7a8"/>
<polygon points="1570.2,386.0 1598.0,386.0 1577.4,648.0 1550.2,647.0" fill="#a7a8a9"/>
<polygon points="1571.0,386.0 1598.0,386.0 1577.4,648.0 1550.9,647.3" fill="#929394"/>
<polygon points="1571.8,386.0 1598.0,386.0 1577.4,648.0 1551.7,647.6" fill="#a9aaab"/>
<polygon points="1572.5,386.0 1598.0,386.0 1577.4,648.0 1552.4,647.9" fill="#a8a9aa"/>
<polygon points="1573.2,386.0 1598.0,386.0 1577.4,648.0 1553.1,648.2" fill="#a8a8aa"/>
<polygon points="1574.0,386.0 1598.0,386.0 1577.4,648.0 1553.9,648.5" fill="#a7a8a9"/>
<polygon points="1574.8,386.0 1598.0,386.0 1577.4,648.0 1554.6,648.7" fill="#a6a7a8"/>
<polygon points="1575.5,386.0 1598.0,386.0 1577.4,648.0 1555.3,649.0" fill="#959697"/>
<polygon points="1576.2,386.0 1598.0,386.0 1577.4,648.0 1556.1,649.2" fill="#a2a3a4"/>
<polygon points="1577.0,386.0 1598.0,386.0 1577.4,648.0 1556.8,649.4" fill="#a1a2a3"/>
<polygon points="1577.8,386.0 1598.0,386.0 1577.4,648.0 1557.6,649.6" fill="#a0a1a2"/>
<polygon points="1578.5,386.0 1598.0,386.0 1577.4,648.0 1558.3,649.8" fill="#9c9c9e"/>
<polygon points="1579.2,386.0 1598.0,386.0 1577.4,648.0 1559.0,650.0" fill="#909192"/>
<polygon points="1580.0,386.0 1598.0,386.0 1577.4,648.0 1559.8,650.1" fill="#959697"/>
<polygon points="1580.8,386.0 1598.0,386.0 1577.4,648.0 1560.5,650.3" fill="#939495"/>
<polygon points="1581.5,386.0 1598.0,386.0 1577.4,648.0 1561.2,650.4" fill="#919293"/>
<polygon points="1582.2,386.0 1598.0,386.0 1577.4,648.0 1562.0,650.4" fill="#8f9091"/>
<polygon points="1583.0,386.0 1598.0,386.0 1577.4,648.0 1562.7,650.5" fill="#8e8f90"/>
<polygon points="1583.8,386.0 1598.0,386.0 1577.4,648.0 1563.4,650.5" fill="#898a8b"/>
<polygon points="1584.5,386.0 1598.0,386.0 1577.4,648.0 1564.2,650.6" fill="#838485"/>
<polygon points="1585.2,386.0 1598.0,386.0 1577.4,648.0 1564.9,650.6" fill="#7d7e7f"/>
<polygon points="1586.0,386.0 1598.0,386.0 1577.4,648.0 1565.6,650.5" fill="#797a7b"/>
<polygon points="1586.8,386.0 1598.0,386.0 1577.4,648.0 1566.4,650.5" fill="#767778"/>
<polygon points="1587.5,386.0 1598.0,386.0 1577.4,648.0 1567.1,650.4" fill="#747576"/>
<polygon points="1588.2,386.0 1598.0,386.0 1577.4,648.0 1567.8,650.3" fill="#717273"/>
<polygon points="1589.0,386.0 1598.0,386.0 1577.4,648.0 1568.6,650.2" fill="#6f7071"/>
<polygon points="1589.8,386.0 1598.0,386.0 1577.4,648.0 1569.3,650.1" fill="#6d6e6f"/>
<polygon points="1590.5,386.0 1598.0,386.0 1577.4,648.0 1570.1,650.0" fill="#6a6b6c"/>
<polygon points="1591.2,386.0 1598.0,386.0 1577.4,648.0 1570.8,649.8" fill="#68696a"/>
<polygon points="1592.0,386.0 1598.0,386.0 1577.4,648.0 1571.5,649.7" fill="#666768"/>
<polygon points="1592.8,386.0 1598.0,386.0 1577.4,648.0 1572.3,649.5" fill="#646566"/>
<polygon points="1593.5,386.0 1598.0,386.0 1577.4,648.0 1573.0,649.3" fill="#616263"/>
<polygon points="1594.2,386.0 1598.0,386.0 1577.4,648.0 1573.7,649.1" fill="#5d5e5f"/>
<polygon points="1595.0,386.0 1598.0,386.0 1577.4,648.0 1574.5,648.9" fill="#878889"/>
<polygon points="1595.8,386.0 1598.0,386.0 1577.4,648.0 1575.2,648.7" fill="#575859"/>
<polygon points="1596.5,386.0 1598.0,386.0 1577.4,648.0 1575.9,648.4" fill="#696a6b"/>
<polygon points="1597.2,386.0 1598.0,386.0 1577.4,648.0 1576.7,648.2" fill="#636465"/>
<g fill="none" stroke="#868788" stroke-width="1">
<path d="M1285,593.7 L1300.5,420 C1302,400 1306,390 1312,380 M1366,380 C1374,392 1378,402 1377,414 L1359.5,600 L1285,593.7"/>
<path d="M1301.9,580.2 L1317.3,422 C1319,404 1324,392 1331,384 M1358,398 C1361,404 1362,410 1361.5,417 L1346.3,584.7 L1301.9,580.2" stroke="#5e5f60"/>
<path d="M1329.6,380 L1325.8,434.8 L1333.4,472.8 L1342.6,473.4 L1355.9,440.5 L1360.6,380"/>
<path d="M1443,608 L1461,422 C1463,404 1472,391 1482,384 M1517,384 C1529,394 1535,412 1533.5,433.4 L1516.4,614.6 L1443,608"/>
<path d="M1459,594.4 L1473.3,429.6 C1475,418 1479,410 1486,406 M1514,413 C1517,420 1519,428 1518.3,437.2 L1503,599.4 L1459,594.4" stroke="#5e5f60"/>
<path d="M1487,380 L1482,450.6 L1488.5,488 L1497.3,488.7 L1510.6,456.3 L1516.6,380"/>
</g>
<path d="M1302.4,385.6 L1276,649.5" stroke="#050505" stroke-width="1" fill="none"/>
</g>
<path d="M1246,385.8 H1585" stroke="#1a1a1a" stroke-width="1"/><path d="M1246,385.8 H1585" stroke="#ff6a6a" stroke-width="1" stroke-dasharray="3 3"/>
<path d="M1246,739.4 H1585" stroke="#1a1a1a" stroke-width="1"/><path d="M1246,739.4 H1585" stroke="#ff6a6a" stroke-width="1" stroke-dasharray="3 3"/>
</g></svg>
<svg width="1673" height="996" viewBox="0 0 1673 996"><g transform="translate(17,13)"><path d="M-7.2,3.2 L0.2,-2.6 L-4.6,-2.6 M0.2,-2.6 L-2.2,-5.6 " fill="none" stroke="#e0e0e0" stroke-width="1.7" stroke-linecap="round" stroke-linejoin="round"/><ellipse cx="2" cy="1.4" rx="5.3" ry="4.6" fill="none" stroke="#e0e0e0" stroke-width="2.2"/><circle cx="2" cy="1.4" r="1.5" fill="#e0e0e0"/></g>
<path d="M255.2,27 V10 a4,4 0 0 1 4,-4 H302.8 a4,4 0 0 1 4,4 V25 Z" fill="#424242"/>
<path d="M309.9,27 V10 a4,4 0 0 1 4,-4 H367 a4,4 0 0 1 4,4 V25 Z" fill="#2c2c2c"/>
<path d="M374,27 V10 a4,4 0 0 1 4,-4 H433.3 a4,4 0 0 1 4,4 V25 Z" fill="#2c2c2c"/>
<path d="M440,27 V10 a4,4 0 0 1 4,-4 H504.8 a4,4 0 0 1 4,4 V25 Z" fill="#2c2c2c"/>
<path d="M511.9,27 V10 a4,4 0 0 1 4,-4 H590.9 a4,4 0 0 1 4,4 V25 Z" fill="#2c2c2c"/>
<path d="M597.6,27 V10 a4,4 0 0 1 4,-4 H649.4 a4,4 0 0 1 4,4 V25 Z" fill="#2c2c2c"/>
<path d="M656.4,27 V10 a4,4 0 0 1 4,-4 H720.2 a4,4 0 0 1 4,4 V25 Z" fill="#2c2c2c"/>
<path d="M727.2,27 V10 a4,4 0 0 1 4,-4 H790.2 a4,4 0 0 1 4,4 V25 Z" fill="#2c2c2c"/>
<path d="M797.2,27 V10 a4,4 0 0 1 4,-4 H872.4 a4,4 0 0 1 4,4 V25 Z" fill="#2c2c2c"/>
<path d="M879.5,27 V10 a4,4 0 0 1 4,-4 H935.2 a4,4 0 0 1 4,4 V25 Z" fill="#2c2c2c"/>
<path d="M942.2,27 V10 a4,4 0 0 1 4,-4 H957.3 a4,4 0 0 1 4,4 V25 Z" fill="#2c2c2c"/>
<path d="M947,15.5 h9.5 M951.75,10.8 v9.5" stroke="#a8a8a8" stroke-width="1.2" fill="none"/>
<rect x="1523.5" y="3.5" width="160" height="19.5" rx="4" fill="#1d1d1d" stroke="#3e3e3e" stroke-width="1"/>
<path d="M1523.5,7.5 a4,4 0 0 1 4,-4 H1554.5 V23 H1527.5 a4,4 0 0 1 -4,-4 Z" fill="#2b2b2b" stroke="#3e3e3e"/>
<g fill="#d0d0d0"><path d="M1528.3,17 L1532,6.5 L1535.3,15 Q1533,18.5 1528.3,17Z"/><circle cx="1540" cy="8" r="1.9"/><circle cx="1538" cy="15.5" r="3.4" fill="none" stroke="#d0d0d0" stroke-width="1.1"/></g>
<path d="M1545.3,11.9 L1548.5,15.1 L1551.7,11.9" fill="none" stroke="#d8d8d8" stroke-width="1.3" stroke-linecap="round" stroke-linejoin="round"/>
<path d="M0,52 V32 a5,5 0 0 1 5,-5 H1238 a5,5 0 0 1 5,5 V52 Z" fill="#373737"/>
<rect x="8.5" y="30.5" width="30.5" height="19" rx="4" fill="#2b2b2b" stroke="#464646" stroke-width="1"/>
<g stroke="#d6d6d6" stroke-width="1.2" fill="none"><path d="M13,41.5 h14 M14,45 h12 M18,38.5 l-2.3,9.5 M24,38.5 l1.2,9.5"/></g><circle cx="24" cy="35.5" r="3.3" fill="#d6d6d6"/>
<path d="M30.3,39.2 L33.5,42.4 L36.7,39.2" fill="none" stroke="#d8d8d8" stroke-width="1.3" stroke-linecap="round" stroke-linejoin="round"/>
<rect x="53" y="30" width="20.5" height="20.5" fill="none" stroke="#f0a020" stroke-width="1.3" stroke-dasharray="3.4 2"/>
<path d="M60,34.5 L60,46 L63,43 L68.3,43 Z" fill="#e8e8e8"/>
<path d="M89.3,35 a4,4 0 0 1 4,-4 H107.3 V49 H93.3 a4,4 0 0 1 -4,-4 Z" fill="#4772b3"/>
<path d="M108.3,31 H178.8 a4,4 0 0 1 4,4 V45 a4,4 0 0 1 -4,4 H108.3 Z" fill="#575757"/>
<rect x="107.5" y="31" width="0.9" height="18" fill="#3a3a3a"/>
<rect x="126.3" y="31" width="0.9" height="18" fill="#3a3a3a"/>
<rect x="145.1" y="31" width="0.9" height="18" fill="#3a3a3a"/>
<rect x="163.9" y="31" width="0.9" height="18" fill="#3a3a3a"/>
<rect x="92.3" y="34" width="12.5" height="12.5" fill="none" stroke="#fff" stroke-width="1.2" stroke-dasharray="2.2 1.4"/>
<path d="M115.1,34 h9 v8 h-4 v4 h-9 v-8 h4 Z" fill="#dcdcdc"/>
<path d="M133.9,34 h9 v8 h-4 v-4 h-5 Z" fill="#dcdcdc"/><rect x="129.9" y="38" width="9" height="8" fill="none" stroke="#dcdcdc" stroke-width="1" stroke-dasharray="2 1.4"/>
<path d="M152.70000000000002,34 h9 v8 h-4 v4 h-9 v-8 h4 Z M152.70000000000002,38 v4 h5 v-4 Z" fill="#dcdcdc" fill-rule="evenodd"/>
<rect x="168.00000000000003" y="34.5" width="12" height="12" fill="none" stroke="#dcdcdc" stroke-width="1" stroke-dasharray="2 1.4"/><rect x="171.00000000000003" y="37.5" width="6" height="6" fill="#dcdcdc"/>
<rect x="497" y="30.5" width="78.5" height="19" rx="4" fill="#2b2b2b" stroke="#464646" stroke-width="1"/>
<g stroke="#d6d6d6" stroke-width="1.2" fill="none" stroke-linecap="round"><path d="M503,35 V45.5 H513.5 M503,45.5 l6.5,-6.5"/><path d="M501,37 l2,-2.6 2,2.6 M511.5,43.5 l2.6,2 -2.6,2" /></g>
<path d="M565.8,39.4 L569.0,42.6 L572.2,39.4" fill="none" stroke="#d8d8d8" stroke-width="1.3" stroke-linecap="round" stroke-linejoin="round"/>
<rect x="581.5" y="30.5" width="31" height="19" rx="4" fill="#2b2b2b" stroke="#464646" stroke-width="1"/>
<g stroke="#d6d6d6" stroke-width="1.2" fill="none"><circle cx="591.0" cy="42.5" r="3.8"/><circle cx="596.0" cy="37.5" r="3.8"/></g><circle cx="593.5" cy="40" r="1.3" fill="#d6d6d6"/>
<path d="M603.8,39.4 L607.0,42.6 L610.2,39.4" fill="none" stroke="#d8d8d8" stroke-width="1.3" stroke-linecap="round" stroke-linejoin="round"/>
<path d="M619,35 a4,4 0 0 1 4,-4 H637.5 V49 H623 a4,4 0 0 1 -4,-4 Z" fill="#575757"/>
<path d="M638.5,31 H665 a4,4 0 0 1 4,4 V45 a4,4 0 0 1 -4,4 H638.5 Z" fill="#2b2b2b" stroke="#464646"/>
<g transform="translate(629,39.5) rotate(-135)"><path d="M-6.2,-5.500 V0 A6.2,6.2 0 0 0 6.2,0 V-5.500 H3.300 V0 A3.300,3.300 0 0 1 -3.300,0 V-5.500 Z" fill="none" stroke="#a4a4a4" stroke-width="1.100" stroke-linejoin="round"/></g>
<g stroke="#d6d6d6" stroke-width="1.2" fill="none"><path d="M640.5,42.5 h13 M641.0,39 v7 M645.0,40.5 v4 M649.0,40.5 v4 M653.0,39 v7"/></g><rect x="650.3" y="33" width="4.200" height="4.200" fill="#d6d6d6"/>
<path d="M659.8,39.4 L663.0,42.6 L666.2,39.4" fill="none" stroke="#d8d8d8" stroke-width="1.3" stroke-linecap="round" stroke-linejoin="round"/>
<path d="M676,35 a4,4 0 0 1 4,-4 H694.5 V49 H680 a4,4 0 0 1 -4,-4 Z" fill="#575757"/>
<path d="M695.5,31 H722 a4,4 0 0 1 4,4 V45 a4,4 0 0 1 -4,4 H695.5 Z" fill="#3b3b3b" stroke="#444"/>
<circle cx="685.5" cy="40" r="5.2" fill="none" stroke="#a8a8a8" stroke-width="1.1"/><circle cx="685.5" cy="40" r="1.7" fill="#c8c8c8"/>
<path d="M699,45 c4,0 4,-10 7,-10 c3,0 3,10 7,10" fill="none" stroke="#b8b8b8" stroke-width="1.1"/>
<path d="M714.8,39.4 L718.0,42.6 L721.2,39.4" fill="none" stroke="#666" stroke-width="1.3" stroke-linecap="round" stroke-linejoin="round"/>
<rect x="1174" y="30.5" width="64" height="19" rx="4" fill="#2b2b2b" stroke="#464646" stroke-width="1"/>
<path d="M1227.3,39.4 L1230.5,42.6 L1233.7,39.4" fill="none" stroke="#d8d8d8" stroke-width="1.3" stroke-linecap="round" stroke-linejoin="round"/>
<rect x="9.5" y="55.5" width="109" height="19" rx="4" fill="#2b2b2b" stroke="#464646" stroke-width="1"/>
<rect x="17.5" y="61.5" width="7.5" height="7.5" fill="#dcdcdc"/><path d="M14.5,62.0 v-3.5 h3.5 M24.5,58.5 h3.5 v3.5 M28.0,68.5 v3.5 h-3.5 M18.0,72.0 h-3.5 v-3.5" fill="none" stroke="#dcdcdc" stroke-width="1.1"/>
<path d="M108.8,64.4 L112.0,67.6 L115.2,64.4" fill="none" stroke="#d8d8d8" stroke-width="1.3" stroke-linecap="round" stroke-linejoin="round"/>
<rect x="124.6" y="56" width="38.400000000000006" height="18" rx="3.5" fill="#292929" opacity="0.85"/>
<rect x="165" y="56" width="43.599999999999994" height="18" rx="3.5" fill="#292929" opacity="0.85"/>
<rect x="211.3" y="56" width="31.19999999999999" height="18" rx="3.5" fill="#292929" opacity="0.85"/>
<rect x="245.2" y="56" width="45.60000000000002" height="18" rx="3.5" fill="#292929" opacity="0.85"/>
<defs><clipPath id="ch2"><rect x="1246" y="27" width="339" height="60"/></clipPath></defs><g clip-path="url(#ch2)">
<path d="M1245.3,52 V32 a5,5 0 0 1 5,-5 H1580 a5,5 0 0 1 5,5 V52 Z" fill="#373737"/>
<rect x="1253.8" y="30.5" width="30.5" height="19" rx="4" fill="#2b2b2b" stroke="#464646" stroke-width="1"/>
<g stroke="#d6d6d6" stroke-width="1.2" fill="none"><path d="M1258.3,41.5 h14 M1259.3,45 h12 M1263.3,38.5 l-2.3,9.5 M1269.3,38.5 l1.2,9.5"/></g><circle cx="1269.3" cy="35.5" r="3.3" fill="#d6d6d6"/>
<path d="M1275.6,39.2 L1278.8,42.4 L1282.0,39.2" fill="none" stroke="#d8d8d8" stroke-width="1.3" stroke-linecap="round" stroke-linejoin="round"/>
<rect x="1298.3" y="30" width="20.5" height="20.5" fill="none" stroke="#f0a020" stroke-width="1.3" stroke-dasharray="3.4 2"/>
<path d="M1305.3,34.5 L1305.3,46 L1308.3,43 L1313.6,43 Z" fill="#e8e8e8"/>
<path d="M1334.6,35 a4,4 0 0 1 4,-4 H1352.6 V49 H1338.6 a4,4 0 0 1 -4,-4 Z" fill="#4772b3"/>
<path d="M1353.6,31 H1424.1 a4,4 0 0 1 4,4 V45 a4,4 0 0 1 -4,4 H1353.6 Z" fill="#575757"/>
<rect x="1352.8" y="31" width="0.9" height="18" fill="#3a3a3a"/>
<rect x="1371.6" y="31" width="0.9" height="18" fill="#3a3a3a"/>
<rect x="1390.4" y="31" width="0.9" height="18" fill="#3a3a3a"/>
<rect x="1409.2" y="31" width="0.9" height="18" fill="#3a3a3a"/>
<rect x="1337.6" y="34" width="12.5" height="12.5" fill="none" stroke="#fff" stroke-width="1.2" stroke-dasharray="2.2 1.4"/>
<path d="M1360.3999999999999,34 h9 v8 h-4 v4 h-9 v-8 h4 Z" fill="#dcdcdc"/>
<path d="M1379.1999999999998,34 h9 v8 h-4 v-4 h-5 Z" fill="#dcdcdc"/><rect x="1375.1999999999998" y="38" width="9" height="8" fill="none" stroke="#dcdcdc" stroke-width="1" stroke-dasharray="2 1.4"/>
<path d="M1397.9999999999998,34 h9 v8 h-4 v4 h-9 v-8 h4 Z M1397.9999999999998,38 v4 h5 v-4 Z" fill="#dcdcdc" fill-rule="evenodd"/>
<rect x="1413.2999999999997" y="34.5" width="12" height="12" fill="none" stroke="#dcdcdc" stroke-width="1" stroke-dasharray="2 1.4"/><rect x="1416.2999999999997" y="37.5" width="6" height="6" fill="#dcdcdc"/>
<rect x="1445.8" y="30.5" width="78.5" height="19" rx="4" fill="#2b2b2b" stroke="#464646" stroke-width="1"/>
<g stroke="#d6d6d6" stroke-width="1.2" fill="none" stroke-linecap="round"><path d="M1451.8,35 V45.5 H1462.3 M1451.8,45.5 l6.5,-6.5"/><path d="M1449.8,37 l2,-2.6 2,2.6 M1460.3,43.5 l2.6,2 -2.6,2" /></g>
<path d="M1514.6,39.4 L1517.8,42.6 L1521.0,39.4" fill="none" stroke="#d8d8d8" stroke-width="1.3" stroke-linecap="round" stroke-linejoin="round"/>
<rect x="1530.5" y="30.5" width="31" height="19" rx="4" fill="#2b2b2b" stroke="#464646" stroke-width="1"/>
<g stroke="#d6d6d6" stroke-width="1.2" fill="none"><circle cx="1540.0" cy="42.5" r="3.8"/><circle cx="1545.0" cy="37.5" r="3.8"/></g><circle cx="1542.5" cy="40" r="1.3" fill="#d6d6d6"/>
<path d="M1552.8,39.4 L1556.0,42.6 L1559.2,39.4" fill="none" stroke="#d8d8d8" stroke-width="1.3" stroke-linecap="round" stroke-linejoin="round"/>
<path d="M1568.4,35 a4,4 0 0 1 4,-4 H1586.9 V49 H1572.4 a4,4 0 0 1 -4,-4 Z" fill="#575757"/>
<g transform="translate(1578.4,39.5) rotate(-135)"><path d="M-6.2,-5.500 V0 A6.2,6.2 0 0 0 6.2,0 V-5.500 H3.300 V0 A3.300,3.300 0 0 1 -3.300,0 V-5.500 Z" fill="none" stroke="#a4a4a4" stroke-width="1.100" stroke-linejoin="round"/></g>
<rect x="1254.8" y="55.5" width="109" height="19" rx="4" fill="#2b2b2b" stroke="#464646" stroke-width="1"/>
<rect x="1262.8" y="61.5" width="7.5" height="7.5" fill="#dcdcdc"/><path d="M1259.8,62.0 v-3.5 h3.5 M1269.8,58.5 h3.5 v3.5 M1273.3,68.5 v3.5 h-3.5 M1263.3,72.0 h-3.5 v-3.5" fill="none" stroke="#dcdcdc" stroke-width="1.1"/>
<path d="M1354.1,64.4 L1357.3,67.6 L1360.5,64.4" fill="none" stroke="#d8d8d8" stroke-width="1.3" stroke-linecap="round" stroke-linejoin="round"/>
<rect x="1369.8999999999999" y="56" width="38.400000000000006" height="18" rx="3.5" fill="#2a2a2a" opacity="1"/>
<rect x="1410.3" y="56" width="43.599999999999994" height="18" rx="3.5" fill="#2a2a2a" opacity="1"/>
<rect x="1456.6" y="56" width="31.19999999999999" height="18" rx="3.5" fill="#2a2a2a" opacity="1"/>
<rect x="1490.5" y="56" width="45.60000000000002" height="18" rx="3.5" fill="#2a2a2a" opacity="1"/>
</g>
<rect x="988" y="55.5" width="31.5" height="19" rx="4" fill="#2b2b2b" stroke="#464646" stroke-width="1"/>
<path d="M991.5,63.3 l0.800,8.700 2.300,-2.900 3.800,-0.400 Z" fill="#dcdcdc"/><path d="M994.3,61.3 q5.300,-6.200 10.600,0 q-5.300,6.200 -10.600,0 Z" fill="none" stroke="#dcdcdc" stroke-width="1.400"/><circle cx="999.6" cy="61.300" r="2.100" fill="#dcdcdc"/>
<path d="M1009.8,64.4 L1013.0,67.6 L1016.2,64.4" fill="none" stroke="#d8d8d8" stroke-width="1.3" stroke-linecap="round" stroke-linejoin="round"/>
<path d="M1025.5,59.5 a4,4 0 0 1 4,-4 H1045 V74.5 H1029.5 a4,4 0 0 1 -4,-4 Z" fill="#4772b3"/>
<path d="M1046,55.5 H1059.5 a4,4 0 0 1 4,4 V70.5 a4,4 0 0 1 -4,4 H1046 Z" fill="#2b2b2b" stroke="#404040"/>
<g stroke="#fff" stroke-width="1.25" fill="none" stroke-linecap="round"><path d="M1031.6,68.6 Q1038.6,66 1041,59.200 M1036.800,58.800 L1041.300,58.600 L1041.500,63 M1029.500,60.500 Q1038,62 1040.500,71.500"/><circle cx="1030.300" cy="70" r="1.800" fill="#4772b3"/></g>
<path d="M1051.5,64.4 L1054.7,67.6 L1057.9,64.4" fill="none" stroke="#d8d8d8" stroke-width="1.3" stroke-linecap="round" stroke-linejoin="round"/>
<path d="M1071,59.5 a4,4 0 0 1 4,-4 H1090 V74.5 H1075 a4,4 0 0 1 -4,-4 Z" fill="#4772b3"/>
<path d="M1091,55.5 H1104.5 a4,4 0 0 1 4,4 V70.5 a4,4 0 0 1 -4,4 H1091 Z" fill="#2b2b2b" stroke="#404040"/>
<circle cx="1078.5" cy="66.5" r="4.8" fill="none" stroke="#fff" stroke-width="1.2"/><circle cx="1082.5" cy="63" r="4.6" fill="#fff"/><path d="M1078.5,66.5 m-2,-1 a3,3 0 0 1 3,-2" stroke="#4772b3" stroke-width="1" fill="none"/>
<path d="M1096.5,64.4 L1099.7,67.6 L1102.9,64.4" fill="none" stroke="#d8d8d8" stroke-width="1.3" stroke-linecap="round" stroke-linejoin="round"/>
<rect x="1116" y="55.5" width="18.5" height="19" rx="4" fill="#3a3a3a" stroke="#454545" stroke-width="1"/>
<g fill="none" stroke="#cfcfcf" stroke-width="1.200"><rect x="1118.600" y="61" width="10" height="10"/><path d="M1121.600,61 v-3.500 h10 v10 h-3"/></g><path d="M1122,64.500 v3.500 h3" stroke="#cfcfcf" stroke-width="1" fill="none" stroke-dasharray="1.200 1"/>
<path d="M1141,59.5 a4,4 0 0 1 4,-4 H1217 V74.5 H1145 a4,4 0 0 1 -4,-4 Z" fill="#575757"/>
<rect x="1159.7" y="55.5" width="18.6" height="19" fill="#4772b3"/>
<rect x="1159.2" y="55.5" width="0.8" height="19" fill="#3a3a3a"/><rect x="1178.2" y="55.5" width="0.8" height="19" fill="#3a3a3a"/><rect x="1197.3" y="55.5" width="0.8" height="19" fill="#3a3a3a"/>
<path d="M1217.5,55.5 H1231.5 a4,4 0 0 1 4,4 V70.5 a4,4 0 0 1 -4,4 H1217.5 Z" fill="#2b2b2b" stroke="#404040"/>
<g fill="none" stroke="#cfcfcf" stroke-width="1.1"><circle cx="1150" cy="65" r="6"/><ellipse cx="1150" cy="65" rx="2.6" ry="6"/><path d="M1144,65 h12"/></g>
<circle cx="1168.8" cy="65" r="6.6" fill="#fff"/>
<circle cx="1187.7" cy="65" r="6" fill="none" stroke="#cfcfcf" stroke-width="1.1"/><path d="M1187.7,59 a6,6 0 0 0 0,12 a6,6 0 0 0 4.3,-1.8 L1187.7,65 Z" fill="#cfcfcf"/>
<circle cx="1206.8" cy="65" r="6" fill="none" stroke="#cfcfcf" stroke-width="1.1"/><path d="M1203.5,63.5 a4,4 0 0 1 4,-2.8" fill="none" stroke="#cfcfcf" stroke-width="1.1"/>
<path d="M1223.3,64.4 L1226.5,67.6 L1229.7,64.4" fill="none" stroke="#d8d8d8" stroke-width="1.3" stroke-linecap="round" stroke-linejoin="round"/>
<rect x="1553" y="55.5" width="31.59999999999991" height="19" rx="4" fill="#2b2b2b" stroke="#464646" stroke-width="1"/>
<path d="M1556.5,63.3 l0.800,8.700 2.300,-2.900 3.800,-0.400 Z" fill="#dcdcdc"/><path d="M1559.3,61.3 q5.300,-6.200 10.600,0 q-5.300,6.200 -10.600,0 Z" fill="none" stroke="#dcdcdc" stroke-width="1.400"/><circle cx="1564.6" cy="61.300" r="2.100" fill="#dcdcdc"/>
<path d="M1574.8,64.4 L1578.0,67.6 L1581.2,64.4" fill="none" stroke="#d8d8d8" stroke-width="1.3" stroke-linecap="round" stroke-linejoin="round"/>
<rect x="8.6" y="86.3" width="40.6" height="68.6" rx="4" fill="#303030" stroke="#3a3a3a" stroke-width="0.8"/>
<rect x="9" y="120.2" width="39.8" height="0.8" fill="#262626"/>
<path d="M8.6,90.3 a4,4 0 0 1 4,-4 H45.2 a4,4 0 0 1 4,4 V120.4 H8.6 Z" fill="#4772b3"/>
<rect x="8.6" y="161.3" width="40.6" height="138.8" rx="4" fill="#303030" stroke="#3a3a3a" stroke-width="0.8"/>
<rect x="9" y="195.6" width="39.8" height="0.8" fill="#262626"/>
<rect x="9" y="230.3" width="39.8" height="0.8" fill="#262626"/>
<rect x="9" y="265.0" width="39.8" height="0.8" fill="#262626"/>
<rect x="8.6" y="306.2" width="40.6" height="69.4" rx="4" fill="#303030" stroke="#3a3a3a" stroke-width="0.8"/>
<rect x="9" y="340.5" width="39.8" height="0.8" fill="#262626"/>
<rect x="8.6" y="381.6" width="40.6" height="34.7" rx="4" fill="#303030" stroke="#3a3a3a" stroke-width="0.8"/>
<rect x="17.5" y="93.5" width="22" height="21.5" fill="none" stroke="#f2a72e" stroke-width="1.3" stroke-dasharray="3.6 2.2"/><path d="M25,98 L25,109.5 L28,106.5 L33.2,106.5 Z" fill="#e8e8e8"/>
<path d="M46.5,118.5 v-3 l-3,3 Z" fill="#9db3d6"/>
<circle cx="28" cy="138" r="11" fill="none" stroke="#e8e8e8" stroke-width="1.4" stroke-dasharray="4.3 4.3"/><circle cx="28" cy="138" r="11" fill="none" stroke="#b03a3a" stroke-width="1.4" stroke-dasharray="4.3 4.3" stroke-dashoffset="4.3"/><path d="M28,129.5 v6 M28,140.5 v6 M19.5,138 h6 M30.500,138 h6" stroke="#c8c8c8" stroke-width="1.1"/>
<g fill="#e4e4e4"><path d="M28,167.5 l3,4.2 h-6 Z M28,190.5 l3,-4.2 h-6 Z M16.500,179 l4.2,-3 v6 Z M39.500,179 l-4.2,-3 v6 Z"/></g><path d="M28,173 v3.5 M28,181.5 v3.5 M22,179 h3.5 M30.500,179 h3.5" stroke="#e4e4e4" stroke-width="1.2" stroke-dasharray="1.6 1.2"/>
<g fill="none" stroke="#e4e4e4" stroke-width="1.2"><path d="M19.500,208 a9.500,9.500 0 0 1 17,0"/><path d="M36.500,218.5 a9.500,9.500 0 0 1 -17,0"/></g><path d="M28,209.8 l3.4,3.4 -3.4,3.4 -3.4,-3.4 Z M16.500,210.5 h5.5 l-2.7,4.3 Z M34,215.5 h5.5 l-2.7,-4.3 Z" fill="#e4e4e4"/>
<rect x="19" y="248" width="8.8" height="8.8" fill="#e4e4e4"/><path d="M23,245 v-5 h13 v13 h-5" fill="none" stroke="#e4e4e4" stroke-width="1.1"/><path d="M29,246.500 l4.500,-4.500 M33.800,245 v-3.200 h-3.200" fill="none" stroke="#e4e4e4" stroke-width="1.1"/><path d="M46.5,262.5 v-3 l-3,3 Z" fill="#8a8a8a"/>
<rect x="24" y="279" width="8" height="8" fill="#e4e4e4"/><circle cx="28" cy="283" r="10" fill="none" stroke="#e4e4e4" stroke-width="1.1" stroke-dasharray="11.500 4.200" stroke-dashoffset="5.700"/><path d="M28,273.500 l2.200,3 h-4.400 Z M28,292.500 l2.200,-3 h-4.400 Z M18.500,283 l3,-2.200 v4.400 Z M37.500,283 l-3,-2.200 v4.400 Z" fill="#e4e4e4"/>
<path d="M18.200,329.500 l1,-4.200 11.500,-11.200 3.200,3.200 -11.500,11.200 Z" fill="#e4e4e4"/><path d="M17,332 c6,5 9,-6 14,-4 c3,1 5,4 9,5" fill="none" stroke="#7fcfa0" stroke-width="1.2"/><path d="M46.5,337.500 v-3 l-3,3 Z" fill="#8a8a8a"/>
<path d="M19.500,346.500 h3.500 v21.500 h-3.500 Z M18.500,368 h21 v2.800 h-21 Z" fill="#e4e4e4"/><path d="M23,353 a15,15 0 0 1 13,15 h-13 Z" fill="#8fd3a9"/>
<g fill="none" stroke="#8fc7a5" stroke-width="1.2"><path d="M21,397 l5,-4.500 h13 v12 l-5,4.500 h-13 Z M21,397 h13 v12 M34,397 l5,-4.500"/><path d="M19,387 v7 M15.500,390.500 h7" stroke="#a5e0bd" stroke-width="1.5"/></g><path d="M46.5,413 v-3 l-3,3 Z" fill="#8a8a8a"/>
<circle cx="1220" cy="182.3" r="13.4" fill="rgba(85,85,85,0.5)"/>
<circle cx="1222.2" cy="180.10000000000002" r="5.600" fill="none" stroke="#eaeaea" stroke-width="1.5"/><path d="M1218,184.3 l-5,5" stroke="#eaeaea" stroke-width="2.4" stroke-linecap="round"/><path d="M1219.2,180.10000000000002 h6 M1222.2,177.10000000000002 v6" stroke="#eaeaea" stroke-width="1.1"/>
<circle cx="1220" cy="212.8" r="13.4" fill="rgba(85,85,85,0.5)"/>
<path d="M1216.5,220.3 c-2,-2 -3.500,-5 -5,-7 c-0.600,-1.500 1,-2.300 2.200,-1 l2,2.200 l-0.800,-8 c0,-1.600 2,-1.600 2.300,0 l0.700,5 l0.200,-7 c0.200,-1.600 2.300,-1.600 2.400,0 l0.200,7 l1.300,-6 c0.500,-1.500 2.400,-1 2.200,0.500 l-0.800,6.500 l2,-4 c0.800,-1.300 2.600,-0.500 2,1 c-1,3 -2,6 -3,8.500 c-0.500,1.200 -1,1.800 -1.500,2.300 Z" fill="#eaeaea"/>
<circle cx="1220" cy="243.3" r="13.4" fill="rgba(85,85,85,0.5)"/>
<g fill="#eaeaea"><circle cx="1216.5" cy="238.8" r="3.400"/><circle cx="1223.5" cy="238.3" r="3.900"/><rect x="1213" y="241.8" width="11" height="7.500" rx="1"/><path d="M1224.5,245.8 l4.500,-2.500 v6.500 l-4.500,-2.500 Z"/></g><circle cx="1216.5" cy="238.8" r="1.200" fill="#333"/><circle cx="1223.5" cy="238.3" r="1.400" fill="#333"/><path d="M1215,249.3 v2.500 M1222,249.3 v2.500" stroke="#eaeaea" stroke-width="1.400"/>
<circle cx="1220" cy="273.8" r="13.4" fill="rgba(85,85,85,0.5)"/>
<g fill="none" stroke="#eaeaea" stroke-width="1.200"><rect x="1212.5" y="266.3" width="15" height="15"/><path d="M1217.5,266.3 v15 M1222.5,266.3 v15 M1212.5,271.3 h15 M1212.5,276.3 h15"/></g>
<circle cx="1561.7" cy="182.3" r="13.4" fill="#1f1f1f"/>
<circle cx="1563.9" cy="180.10000000000002" r="5.600" fill="none" stroke="#eaeaea" stroke-width="1.5"/><path d="M1559.7,184.3 l-5,5" stroke="#eaeaea" stroke-width="2.4" stroke-linecap="round"/><path d="M1560.9,180.10000000000002 h6 M1563.9,177.10000000000002 v6" stroke="#eaeaea" stroke-width="1.1"/>
<circle cx="1561.7" cy="212.8" r="13.4" fill="#1f1f1f"/>
<path d="M1558.2,220.3 c-2,-2 -3.500,-5 -5,-7 c-0.600,-1.500 1,-2.300 2.200,-1 l2,2.200 l-0.800,-8 c0,-1.600 2,-1.600 2.300,0 l0.700,5 l0.200,-7 c0.200,-1.600 2.300,-1.600 2.400,0 l0.200,7 l1.300,-6 c0.500,-1.500 2.400,-1 2.200,0.500 l-0.800,6.500 l2,-4 c0.800,-1.300 2.600,-0.500 2,1 c-1,3 -2,6 -3,8.500 c-0.500,1.200 -1,1.800 -1.500,2.300 Z" fill="#eaeaea"/>
<circle cx="1561.7" cy="244.3" r="13.4" fill="#1f1f1f"/>
<g fill="#eaeaea"><circle cx="1558.2" cy="239.8" r="3.400"/><circle cx="1565.2" cy="239.3" r="3.900"/><rect x="1554.7" y="242.8" width="11" height="7.500" rx="1"/><path d="M1566.2,246.8 l4.500,-2.500 v6.500 l-4.500,-2.500 Z"/></g><circle cx="1558.2" cy="239.8" r="1.200" fill="#333"/><circle cx="1565.2" cy="239.3" r="1.400" fill="#333"/><path d="M1556.7,250.3 v2.500 M1563.7,250.3 v2.500" stroke="#eaeaea" stroke-width="1.400"/>
<g stroke-width="2.200" stroke-linecap="round"><path d="M1192.8,128.3 L1194.7,98.6" stroke="#2c8fff"/><path d="M1192.8,128.3 L1169.8,136.3" stroke="#ff3352"/><path d="M1192.8,128.3 L1215.3,138.7" stroke="#8bdc00"/></g>
<circle cx="1170.3" cy="117" r="6.2" fill="#5c8a1c"/>
<circle cx="1216" cy="119.4" r="6.2" fill="#99364a"/>
<circle cx="1191.2" cy="157.2" r="6.2" fill="#2e62a3"/>
<circle cx="1194.7" cy="98.6" r="7.6" fill="#2c8fff"/>
<text x="1194.7" y="102.5" text-anchor="middle" font-size="11" fill="#000" font-family="DejaVu Sans, Liberation Sans, sans-serif">Z</text>
<circle cx="1169.8" cy="136.3" r="7.6" fill="#ff3352"/>
<text x="1169.8" y="140.20000000000002" text-anchor="middle" font-size="11" fill="#000" font-family="DejaVu Sans, Liberation Sans, sans-serif">X</text>
<circle cx="1215.3" cy="138.7" r="7.6" fill="#8bdc00"/>
<text x="1215.3" y="142.6" text-anchor="middle" font-size="11" fill="#000" font-family="DejaVu Sans, Liberation Sans, sans-serif">Y</text>
<g stroke-width="2.200" stroke-linecap="round"><path d="M1534.8,127.2 L1538.2,95.8" stroke="#2f66b0"/><path d="M1534.8,127.2 L1502.4,124.8" stroke="#ff3352"/></g>
<circle cx="1567.2" cy="131" r="6.2" fill="#99364a"/>
<circle cx="1532" cy="160.3" r="6.2" fill="#2c8fff"/>
<circle cx="1538.2" cy="95.8" r="7.6" fill="#2f66b0"/>
<text x="1538.2" y="99.7" text-anchor="middle" font-size="11" fill="#000" font-family="DejaVu Sans, Liberation Sans, sans-serif">Z</text>
<circle cx="1502.4" cy="124.8" r="7.6" fill="#ff3352"/>
<text x="1502.4" y="128.7" text-anchor="middle" font-size="11" fill="#000" font-family="DejaVu Sans, Liberation Sans, sans-serif">X</text>
<circle cx="1534.8" cy="127.2" r="7.6" fill="#8bdc00"/>
<text x="1534.8" y="131.1" text-anchor="middle" font-size="11" fill="#000" font-family="DejaVu Sans, Liberation Sans, sans-serif">Y</text>
<rect x="1235" y="93.5" width="9" height="13" rx="3.5" fill="#393839" opacity="0.9"/>
<path d="M1241.5,96.200 l-3,3.700 3,3.700" fill="none" stroke="#bcbcbc" stroke-width="1.100"/>
<rect x="1245" y="93.5" width="8" height="13" rx="3.5" fill="#1c1c1c"/>
<path d="M1247.3,96.200 l3,3.700 -3,3.700" fill="none" stroke="#bcbcbc" stroke-width="1.100"/>
<rect x="1577" y="93.5" width="9" height="13" rx="3.5" fill="#1c1c1c"/>
<path d="M1583.500,96.200 l-3,3.700 3,3.700" fill="none" stroke="#bcbcbc" stroke-width="1.100"/>
<defs><clipPath id="col"><path d="M1588,332 V32 a5,5 0 0 1 5,-5 H1680 V337 H1593 a5,5 0 0 1 -5,-5 Z"/></clipPath><clipPath id="cpr"><path d="M1588,991.5 V345 a5,5 0 0 1 5,-5 H1680 V996.5 H1593 a5,5 0 0 1 -5,-5 Z"/></clipPath></defs>
<g clip-path="url(#col)">
<rect x="1588" y="27" width="90" height="310" fill="#282828"/>
<rect x="1588" y="68" width="90" height="20" fill="#2b2b2b"/>
<rect x="1588" y="108" width="90" height="20" fill="#2b2b2b"/>
<rect x="1588" y="148" width="90" height="20" fill="#2b2b2b"/>
<rect x="1588" y="188" width="90" height="20" fill="#2b2b2b"/>
<rect x="1588" y="228" width="90" height="20" fill="#2b2b2b"/>
<rect x="1588" y="268" width="90" height="20" fill="#2b2b2b"/>
<rect x="1588" y="308" width="90" height="20" fill="#2b2b2b"/>
<rect x="1588" y="128" width="90" height="20" fill="#3a5588"/>
<rect x="1617" y="73" width="1" height="270" fill="#5a5a5a"/>
<path d="M1613.500,56.500 h7 l-3.500,6 Z" fill="#c8c8c8"/>
<rect x="1628" y="48" width="20" height="18.5" rx="4" fill="#3c3c3c" stroke="#585858" stroke-width="1"/>
<path d="M1631.500,53 h13 v4.500 h-13 Z M1632.500,58.500 h11 v7 h-11 Z" fill="#dedede"/><rect x="1636" y="60" width="4" height="1.500" fill="#3c3c3c"/>
<rect x="1588" y="27" width="90" height="25" fill="#383838"/>
<rect x="1596.6" y="30.5" width="30.7" height="19" rx="4" fill="#2b2b2b" stroke="#464646" stroke-width="1"/>
<g fill="#d6d6d6"><rect x="1601" y="33.2" width="4.6" height="2.6"/><rect x="1607.8" y="38.6" width="6.400" height="2.600"/><rect x="1607.8" y="43.600" width="6.400" height="2.600"/></g><path d="M1603.300,36 v9 h4 M1603.300,40 h4" fill="none" stroke="#d6d6d6" stroke-width="1.100"/>
<path d="M1618.1,39.2 L1621.3,42.4 L1624.5,39.2" fill="none" stroke="#d8d8d8" stroke-width="1.3" stroke-linecap="round" stroke-linejoin="round"/>
<rect x="1633.8" y="30.5" width="30.7" height="19" rx="4" fill="#2b2b2b" stroke="#464646" stroke-width="1"/>
<g fill="none" stroke="#d6d6d6" stroke-width="1.100"><rect x="1641.5" y="33" width="10.500" height="10" fill="#2b2b2b"/><path d="M1639.500,35.500 v9.500 h10 M1637.500,38 v9.500 h10"/></g><path d="M1642.500,42 l3,-5 2,3 1.200,-1.500 2.500,3.500 Z" fill="#d6d6d6"/>
<path d="M1655.3,39.2 L1658.5,42.4 L1661.7,39.2" fill="none" stroke="#d8d8d8" stroke-width="1.3" stroke-linecap="round" stroke-linejoin="round"/>
<path d="M1635,74.8 v7 l6.500,-3.500 Z" fill="#6e6e6e"/>
<g fill="#7a5232"><path d="M1652,75 a6,6 0 0 1 12,0 c0,3 -2.500,4 -3,6 h-6 c-0.500,-2 -3,-3 -3,-6 Z"/><rect x="1655" y="82" width="6" height="1.300"/><rect x="1656" y="84" width="4" height="1.300"/></g><path d="M1655.5,77 h5 M1656.2,77 v2.500 M1659.8,77 v2.500" stroke="#2b2b2b" stroke-width="1" fill="none"/>
<path d="M1635,94.8 v7 l6.500,-3.500 Z" fill="#c8c8c8"/>
<g fill="#e0914d"><path d="M1652,95 a6,6 0 0 1 12,0 c0,3 -2.500,4 -3,6 h-6 c-0.500,-2 -3,-3 -3,-6 Z"/><rect x="1655" y="102" width="6" height="1.300"/><rect x="1656" y="104" width="4" height="1.300"/></g><path d="M1655.5,97 h5 M1656.2,97 v2.500 M1659.8,97 v2.500" stroke="#2b2b2b" stroke-width="1" fill="none"/>
<path d="M1635,114.8 v7 l6.500,-3.500 Z" fill="#c8c8c8"/>
<g fill="#e0914d"><circle cx="1654.5" cy="115.1" r="3.300"/><circle cx="1661" cy="114.6" r="3.800"/><rect x="1651" y="118.1" width="11" height="7" rx="1"/><path d="M1662.5,121.6 l3.500,-2 v5.500 l-3.500,-2 Z"/></g><circle cx="1654.5" cy="115.1" r="1.100" fill="#2b2b2b"/><circle cx="1661" cy="114.6" r="1.300" fill="#2b2b2b"/>
<path d="M1635,134.7 v7 l6.500,-3.500 Z" fill="#8f9bb5"/>
<rect x="1648.2" y="129.2" width="19.600" height="17.600" rx="4" fill="#5a6b94" stroke="#7b8bb0" stroke-width="0.800"/>
<path d="M1652.5,133.0 h11.400 l-5.700,10.600 Z" fill="none" stroke="#a9806a" stroke-width="2.800" stroke-linejoin="round"/>
<path d="M1635,154.7 v7 l6.500,-3.500 Z" fill="#c8c8c8"/>
<path d="M1652.5,153.0 h11.400 l-5.700,10.600 Z" fill="none" stroke="#e8934a" stroke-width="2.800" stroke-linejoin="round"/>
<path d="M1635,174.7 v7 l6.500,-3.500 Z" fill="#c8c8c8"/>
<path d="M1652.5,173.0 h11.400 l-5.700,10.600 Z" fill="none" stroke="#e8934a" stroke-width="2.800" stroke-linejoin="round"/>
<path d="M1635,194.7 v7 l6.500,-3.500 Z" fill="#6e6e6e"/>
<path d="M1652.5,193.0 h11.400 l-5.700,10.600 Z" fill="none" stroke="#8a5a36" stroke-width="2.800" stroke-linejoin="round"/>
<path d="M1635,214.7 v7 l6.500,-3.500 Z" fill="#6e6e6e"/>
<path d="M1652.5,213.0 h11.400 l-5.700,10.600 Z" fill="none" stroke="#8a5a36" stroke-width="2.800" stroke-linejoin="round"/>
<path d="M1635,234.7 v7 l6.500,-3.500 Z" fill="#6e6e6e"/>
<path d="M1652.5,233.0 h11.400 l-5.700,10.600 Z" fill="none" stroke="#8a5a36" stroke-width="2.800" stroke-linejoin="round"/>
<path d="M1635,254.7 v7 l6.500,-3.500 Z" fill="#6e6e6e"/>
<path d="M1652.5,253.0 h11.400 l-5.700,10.600 Z" fill="none" stroke="#8a5a36" stroke-width="2.800" stroke-linejoin="round"/>
<path d="M1635,274.7 v7 l6.500,-3.500 Z" fill="#c8c8c8"/>
<path d="M1652.5,273.0 h11.400 l-5.700,10.600 Z" fill="none" stroke="#e8934a" stroke-width="2.800" stroke-linejoin="round"/>
<path d="M1635,294.7 v7 l6.500,-3.500 Z" fill="#c8c8c8"/>
<path d="M1652.5,293.0 h11.400 l-5.700,10.600 Z" fill="none" stroke="#e8934a" stroke-width="2.800" stroke-linejoin="round"/>
<path d="M1635,314.7 v7 l6.500,-3.500 Z" fill="#c8c8c8"/>
<path d="M1652.5,313.0 h11.400 l-5.700,10.600 Z" fill="none" stroke="#e8934a" stroke-width="2.800" stroke-linejoin="round"/>
<path d="M1635,334.7 v7 l6.500,-3.500 Z" fill="#c8c8c8"/>
<path d="M1652.5,333.0 h11.400 l-5.700,10.600 Z" fill="none" stroke="#e8934a" stroke-width="2.800" stroke-linejoin="round"/>
</g>
<g clip-path="url(#cpr)">
<rect x="1588" y="340" width="90" height="660" fill="#424242"/>
<rect x="1588" y="340" width="90" height="24.500" fill="#383838"/>
<rect x="1588" y="364.5" width="28.500" height="640" fill="#232323"/>
<rect x="1596.6" y="343" width="31" height="18.5" rx="4" fill="#2b2b2b" stroke="#464646" stroke-width="1"/>
<g fill="#dcdcdc"><rect x="1600.8" y="345.2" width="12.500" height="5.800" rx="2.900"/><rect x="1600.800" y="353" width="12.500" height="5.800" rx="2.900"/></g><path d="M1606.500,346.300 h4 a1.800,1.800 0 0 1 0,3.600 h-4 Z M1610,354.100 h0.500 a1.800,1.800 0 0 1 0,3.600 h-0.500 Z" fill="#2b2b2b"/>
<path d="M1618.1,350.9 L1621.3,354.1 L1624.5,350.9" fill="none" stroke="#d8d8d8" stroke-width="1.3" stroke-linecap="round" stroke-linejoin="round"/>
<path d="M1616.500,373.9 H1594 a4,4 0 0 0 -4,4 V396.29999999999995 a4,4 0 0 0 4,4 H1616.500 Z" fill="#2c2c2c"/>
<path d="M1616.500,409.6 H1594 a4,4 0 0 0 -4,4 V432.0 a4,4 0 0 0 4,4 H1616.500 Z" fill="#2c2c2c"/>
<path d="M1616.500,437.8 H1594 a4,4 0 0 0 -4,4 V460.2 a4,4 0 0 0 4,4 H1616.500 Z" fill="#2c2c2c"/>
<path d="M1616.500,466 H1594 a4,4 0 0 0 -4,4 V488.4 a4,4 0 0 0 4,4 H1616.500 Z" fill="#2c2c2c"/>
<path d="M1616.500,494.2 H1594 a4,4 0 0 0 -4,4 V516.6 a4,4 0 0 0 4,4 H1616.500 Z" fill="#2c2c2c"/>
<path d="M1616.500,522.4 H1594 a4,4 0 0 0 -4,4 V544.8 a4,4 0 0 0 4,4 H1616.500 Z" fill="#2c2c2c"/>
<path d="M1616.500,557.5 H1594 a4,4 0 0 0 -4,4 V579.9 a4,4 0 0 0 4,4 H1616.500 Z" fill="#2c2c2c"/>
<path d="M1616.500,585.7 H1594 a4,4 0 0 0 -4,4 V608.1 a4,4 0 0 0 4,4 H1616.500 Z" fill="#2c2c2c"/>
<path d="M1616.500,613.9 H1594 a4,4 0 0 0 -4,4 V636.3 a4,4 0 0 0 4,4 H1616.500 Z" fill="#2c2c2c"/>
<path d="M1616.500,642.1 H1594 a4,4 0 0 0 -4,4 V664.5 a4,4 0 0 0 4,4 H1616.500 Z" fill="#2c2c2c"/>
<path d="M1616.500,670.3 H1594 a4,4 0 0 0 -4,4 V692.6999999999999 a4,4 0 0 0 4,4 H1616.500 Z" fill="#2c2c2c"/>
<path d="M1616.500,698.5 H1594 a4,4 0 0 0 -4,4 V720.9 a4,4 0 0 0 4,4 H1616.500 Z" fill="#424242"/>
<path d="M1616.500,726.7 H1594 a4,4 0 0 0 -4,4 V749.1 a4,4 0 0 0 4,4 H1616.500 Z" fill="#2c2c2c"/>
<path d="M1616.500,762 H1594 a4,4 0 0 0 -4,4 V784.4 a4,4 0 0 0 4,4 H1616.500 Z" fill="#2c2c2c"/>
<g stroke="#d8d8d8" fill="none"><path d="M1598.500,380.09999999999997 v8" stroke-width="1.300"/><path d="M1607,395.09999999999997 v-9" stroke-width="2.600"/><path d="M1604,379.59999999999997 v3.500 a3,3 0 0 0 6,0 v-3.500" stroke-width="2"/></g><ellipse cx="1598.500" cy="391.59999999999997" rx="2.300" ry="3.200" fill="#d8d8d8"/>
<g fill="none" stroke="#d8d8d8" stroke-width="1.300"><rect x="1596.500" y="418.8" width="13" height="10"/><path d="M1599,418.8 v-2.500 h5 v2.500 M1599,422.3 h5 M1599,425.3 h5 M1606.500,421.8 v4"/></g>
<g fill="#d8d8d8"><rect x="1597" y="444.0" width="12" height="4"/><path d="M1595.500,449.0 h15 v5 h-2.500 v-2.500 h-10 v2.500 h-2.500 Z"/><rect x="1599" y="452.5" width="8" height="6.500" fill="none" stroke="#d8d8d8" stroke-width="1.100"/><path d="M1600.500,457.5 l2.500,-3.500 2.500,3.500 Z"/></g>
<g fill="none" stroke="#d8d8d8" stroke-width="1.100"><rect x="1600.500" y="472.2" width="10" height="9.500"/><path d="M1598.500,474.7 v9.500 h10 M1596.500,477.2 v9.500 h10"/></g><path d="M1601.500,480.7 l3,-5 2,3 1.200,-1.500 2,3.500 Z" fill="#d8d8d8"/>
<g fill="#d8d8d8"><path d="M1596.500,511.4 L1600.500,500.4 L1604,509.4 Q1601,513.4 1596.500,511.4Z"/><circle cx="1609" cy="502.4" r="2"/><circle cx="1607" cy="510.4" r="3.400" fill="none" stroke="#d8d8d8" stroke-width="1.100"/></g>
<g fill="none" stroke="#e06070" stroke-width="1.400"><circle cx="1603" cy="535.6" r="6.200"/><path d="M1596.500,542.1 l13,-13"/></g><path d="M1599,533.6 q3,-3 5,-1 q1,2 -1,3 q-1,2 1,3 q-2,2 -4,0 q0,-3 -1,-5 Z" fill="#e06070"/>
<rect x="1598.500" y="566.2" width="9" height="9" fill="#e8954a"/><path d="M1595.500,566.7 v-3.500 h3.500 M1607,563.2 h3.500 v3.500 M1610.500,574.7 v3.500 h-3.500 M1599,578.2 h-3.500 v-3.500" fill="none" stroke="#e8954a" stroke-width="1.200"/>
<g transform="translate(1603.5,598.9000000000001) rotate(45)" fill="#5b8fdc"><rect x="-1.600" y="-2" width="3.200" height="10.500" rx="1"/><circle cx="0" cy="-4" r="4.300"/><rect x="-1.500" y="-9" width="3" height="5" fill="#2c2c2c"/></g>
<g fill="#4f9fe0" stroke="#4f9fe0" stroke-width="1.100"><path d="M1598.500,622.1 L1609,621.6 M1598.500,622.1 L1608,632.1 M1598.500,622.1 V632.1" fill="none"/><circle cx="1598.500" cy="622.1" r="1.900"/><circle cx="1609" cy="621.6" r="1.100"/><circle cx="1608" cy="632.1" r="1.400"/><circle cx="1598.500" cy="632.1" r="1"/></g>
<path d="M1608.500,650.8000000000001 a7,7 0 1 0 1,7" fill="none" stroke="#5b8fdc" stroke-width="1.500"/><circle cx="1603" cy="655.3000000000001" r="2.800" fill="#5b8fdc"/><circle cx="1609" cy="649.8000000000001" r="1.700" fill="#5b8fdc"/>
<g fill="none" stroke="#7a9fd8" stroke-width="1.500"><path d="M1596.500,687.0 a4,4 0 0 0 5,4 l7,-6.500 a5,5 0 0 0 -6,-8 Z"/><circle cx="1601" cy="686.5" r="1.800"/><circle cx="1605.500" cy="681.5" r="1.200"/></g>
<g fill="none" stroke="#3fd0a3" stroke-width="1.300"><path d="M1597,706.2 h12 l-6,11.500 Z"/><rect x="1595.500" y="704.7" width="3" height="3" fill="#424242"/><rect x="1607.500" y="704.7" width="3" height="3" fill="#424242"/><rect x="1601.500" y="716.2" width="3" height="3" fill="#424242"/></g>
<circle cx="1603" cy="739.9000000000001" r="6.300" fill="none" stroke="#e0707c" stroke-width="1.300"/><path d="M1603,739.9000000000001 L1609.300,739.9000000000001 A6.300,6.300 0 1 0 1603,746.2 Z" fill="#e0707c"/>
<g fill="#e0707c"><rect x="1596.5" y="768.7" width="3.250" height="3.250"/><rect x="1596.5" y="775.2" width="3.250" height="3.250"/><rect x="1599.75" y="771.95" width="3.250" height="3.250"/><rect x="1599.75" y="778.45" width="3.250" height="3.250"/><rect x="1603.0" y="768.7" width="3.250" height="3.250"/><rect x="1603.0" y="775.2" width="3.250" height="3.250"/><rect x="1606.25" y="771.95" width="3.250" height="3.250"/><rect x="1606.25" y="778.45" width="3.250" height="3.250"/></g><rect x="1596.500" y="768.7" width="13" height="13" fill="none" stroke="#e0707c" stroke-width="0.800"/>
<rect x="1616.5" y="461.3" width="60" height="95.2" fill="#373737"/>
<rect x="1616.5" y="581.5" width="60" height="95.2" fill="#373737"/>
<rect x="1616.5" y="772.7" width="60" height="35.8" fill="#373737"/>
<rect x="1630" y="379" width="8" height="8" fill="#dcdcdc"/><path d="M1627,379.5 v-3.500 h3.500 M1637.5,376 h3.500 v3.500 M1641,386.5 v3.500 h-3.500 M1630.5,390 h-3.500 v-3.500" fill="none" stroke="#dcdcdc" stroke-width="1.100"/>
<path d="M1624.8,414 a4,4 0 0 1 4,-4 H1655.500 V428.500 H1628.800 a4,4 0 0 1 -4,-4 Z" fill="#2b2b2b" stroke="#3e3e3e" stroke-width="0.800"/>
<rect x="1656" y="410" width="30" height="18.500" fill="#1d1d1d" stroke="#3e3e3e" stroke-width="0.800"/>
<g fill="none" stroke="#e0e0e0" stroke-width="1.200"><path d="M1630,414.500 h10.500 l-5.250,10 Z"/><rect x="1628.500" y="413" width="2.800" height="2.800" fill="#2b2b2b"/><rect x="1639" y="413" width="2.800" height="2.800" fill="#2b2b2b"/><rect x="1633.800" y="423" width="2.800" height="2.800" fill="#2b2b2b"/></g>
<path d="M1646.3,418.4 L1649.5,421.6 L1652.7,418.4" fill="none" stroke="#d8d8d8" stroke-width="1.3" stroke-linecap="round" stroke-linejoin="round"/>
<path d="M1625,447.0 h6.500 l-3.250,5.500 Z" fill="#b0b0b0"/>
<rect x="1624.8" y="469.6" width="60" height="78.7" rx="4" fill="#2d2d2d" stroke="#4c4c4c" stroke-width="0.8"/>
<path d="M1636,535.500 v6 l5,-3 Z" fill="#a8a8a8"/>
<path d="M1625,567.0 h6.500 l-3.250,5.500 Z" fill="#b0b0b0"/>
<rect x="1624.8" y="590" width="60" height="78.7" rx="4" fill="#2d2d2d" stroke="#4c4c4c" stroke-width="0.8"/>
<path d="M1636,655.500 v6 l5,-3 Z" fill="#a8a8a8"/>
<path d="M1625.500,686.0 v6.500 l5.500,-3.250 Z" fill="#b0b0b0"/>
<path d="M1625.500,710.0 v6.500 l5.500,-3.250 Z" fill="#b0b0b0"/>
<path d="M1625.500,734.0 v6.500 l5.500,-3.250 Z" fill="#b0b0b0"/>
<path d="M1625,759.0 h6.500 l-3.250,5.500 Z" fill="#b0b0b0"/>
<path d="M1625.500,818.0 v6.500 l5.500,-3.250 Z" fill="#b0b0b0"/>
<path d="M1625.500,842.0 v6.500 l5.500,-3.250 Z" fill="#b0b0b0"/>
<path d="M1625.500,866.0 v6.500 l5.500,-3.250 Z" fill="#b0b0b0"/>
<path d="M1625.500,890.0 v6.500 l5.500,-3.250 Z" fill="#b0b0b0"/>
</g></svg>
<div id="tx"><span class="t" style="left:35.02px;top:7.71px;color:#e5e5e5;font-size:11px;letter-spacing:0.119px;">File</span>
<span class="t" style="left:67.72px;top:7.71px;color:#e5e5e5;font-size:11px;letter-spacing:-0.286px;">Edit</span>
<span class="t" style="left:101.72px;top:7.71px;color:#e5e5e5;font-size:11px;letter-spacing:-0.735px;">Render</span>
<span class="t" style="left:152.23px;top:7.71px;color:#e5e5e5;font-size:11px;letter-spacing:-0.537px;">Window</span>
<span class="t" style="left:206.62px;top:7.71px;color:#e5e5e5;font-size:11px;letter-spacing:0.101px;">Help</span>
<span class="t" style="left:262.82px;top:10.71px;color:#ffffff;font-size:11px;letter-spacing:-0.410px;">Layout</span>
<span class="t" style="left:317.12px;top:10.71px;color:#9c9c9c;font-size:11px;letter-spacing:-0.451px;">Modeling</span>
<span class="t" style="left:381.77px;top:10.71px;color:#9c9c9c;font-size:11px;letter-spacing:-0.367px;">Sculpting</span>
<span class="t" style="left:447.34px;top:10.71px;color:#9c9c9c;font-size:11px;letter-spacing:-0.292px;">UV Editing</span>
<span class="t" style="left:520.23px;top:10.71px;color:#9c9c9c;font-size:11px;letter-spacing:-0.646px;">Texture Paint</span>
<span class="t" style="left:605.17px;top:10.71px;color:#9c9c9c;font-size:11px;letter-spacing:-0.594px;">Shading</span>
<span class="t" style="left:664.81px;top:10.71px;color:#9c9c9c;font-size:11px;letter-spacing:-0.445px;">Animation</span>
<span class="t" style="left:734.82px;top:10.71px;color:#9c9c9c;font-size:11px;letter-spacing:-0.536px;">Rendering</span>
<span class="t" style="left:805.38px;top:10.71px;color:#9c9c9c;font-size:11px;letter-spacing:-0.503px;">Compositing</span>
<span class="t" style="left:887.07px;top:10.71px;color:#9c9c9c;font-size:11px;letter-spacing:-0.336px;">Scripting</span>
<span class="t" style="left:1562.37px;top:7.71px;color:#e5e5e5;font-size:11px;letter-spacing:-0.557px;">Scene</span>
<span class="t" style="left:522.28px;top:34.70px;color:#e5e5e5;font-size:11px;letter-spacing:-0.408px;">Global</span>
<span class="t" style="left:1182.58px;top:34.70px;color:#e5e5e5;font-size:11px;letter-spacing:-0.565px;">Options</span>
<span class="t" style="left:35.28px;top:59.70px;color:#e5e5e5;font-size:11px;letter-spacing:-0.499px;">Object Mode</span>
<span class="t" style="left:131.81px;top:59.70px;color:#e5e5e5;font-size:11px;letter-spacing:-0.432px;">View</span>
<span class="t" style="left:170.97px;top:59.70px;color:#e5e5e5;font-size:11px;letter-spacing:-0.389px;">Select</span>
<span class="t" style="left:217.51px;top:59.70px;color:#e5e5e5;font-size:11px;letter-spacing:-0.452px;">Add</span>
<span class="t" style="left:251.08px;top:59.70px;color:#e5e5e5;font-size:11px;letter-spacing:-0.349px;">Object</span>
<span class="t" style="left:1471.08px;top:34.70px;color:#e5e5e5;font-size:11px;letter-spacing:-0.408px;">Global</span>
<span class="t" style="left:1280.58px;top:59.70px;color:#e5e5e5;font-size:11px;letter-spacing:-0.499px;">Object Mode</span>
<span class="t" style="left:1377.11px;top:59.70px;color:#e5e5e5;font-size:11px;letter-spacing:-0.432px;">View</span>
<span class="t" style="left:1416.27px;top:59.70px;color:#e5e5e5;font-size:11px;letter-spacing:-0.389px;">Select</span>
<span class="t" style="left:1462.81px;top:59.70px;color:#e5e5e5;font-size:11px;letter-spacing:-0.452px;">Add</span>
<span class="t" style="left:1496.38px;top:59.70px;color:#e5e5e5;font-size:11px;letter-spacing:-0.349px;">Object</span>
<span class="t" style="left:67.14px;top:88.70px;color:#f2f2f2;font-size:11px;letter-spacing:-0.564px;text-shadow:0 0 2px #000,0 1px 1px #000">User Orthographic</span>
<span class="t" style="left:67.05px;top:106.70px;color:#f2f2f2;font-size:11px;letter-spacing:-0.463px;text-shadow:0 0 2px #000,0 1px 1px #000">(2) Collection | Cylinder.001</span>
<span class="t" style="left:1255.28px;top:88.70px;color:#f2f2f2;font-size:11px;letter-spacing:-0.604px;">Camera Perspective</span>
<span class="t" style="left:1254.95px;top:106.70px;color:#f2f2f2;font-size:11px;letter-spacing:-0.470px;">(2) Collection | Cylinder.001</span>
<span class="t" style="left:1652.48px;top:53.70px;color:#e2e2e2;font-size:11px;letter-spacing:-0.500px;">Collection</span>
<span class="t" style="left:1650.28px;top:378.20px;color:#e2e2e2;font-size:11px;letter-spacing:-0.500px;">Cylinder.001</span>
<span class="t" style="left:1663.08px;top:414.70px;color:#e2e2e2;font-size:11px;letter-spacing:-0.500px;">Cylinder.001</span>
<span class="t" style="left:1639.01px;top:443.36px;color:#e2e2e2;font-size:12px;letter-spacing:-0.550px;">Vertex Groups</span>
<span class="t" style="left:1638.31px;top:563.36px;color:#e2e2e2;font-size:12px;letter-spacing:-0.550px;">Shape Keys</span>
<span class="t" style="left:1638.06px;top:683.36px;color:#e2e2e2;font-size:12px;letter-spacing:-0.550px;">UV Maps</span>
<span class="t" style="left:1639.01px;top:707.36px;color:#e2e2e2;font-size:12px;letter-spacing:-0.550px;">Vertex Colors</span>
<span class="t" style="left:1637.92px;top:731.36px;color:#e2e2e2;font-size:12px;letter-spacing:-0.550px;">Face Maps</span>
<span class="t" style="left:1637.92px;top:755.36px;color:#e2e2e2;font-size:12px;letter-spacing:-0.550px;">Normals</span>
<span class="t" style="left:1662.61px;top:785.21px;color:#e2e2e2;font-size:11px;letter-spacing:-0.500px;">Auto Smooth</span>
<span class="t" style="left:1639.14px;top:815.36px;color:#e2e2e2;font-size:12px;letter-spacing:-0.550px;">Texture Space</span>
<span class="t" style="left:1637.92px;top:839.36px;color:#e2e2e2;font-size:12px;letter-spacing:-0.550px;">Remesh</span>
<span class="t" style="left:1638.43px;top:863.36px;color:#e2e2e2;font-size:12px;letter-spacing:-0.550px;">Geometry Data</span>
<span class="t" style="left:1638.43px;top:887.36px;color:#e2e2e2;font-size:12px;letter-spacing:-0.550px;">Custom Properties</span></div>
</div></body></html>
